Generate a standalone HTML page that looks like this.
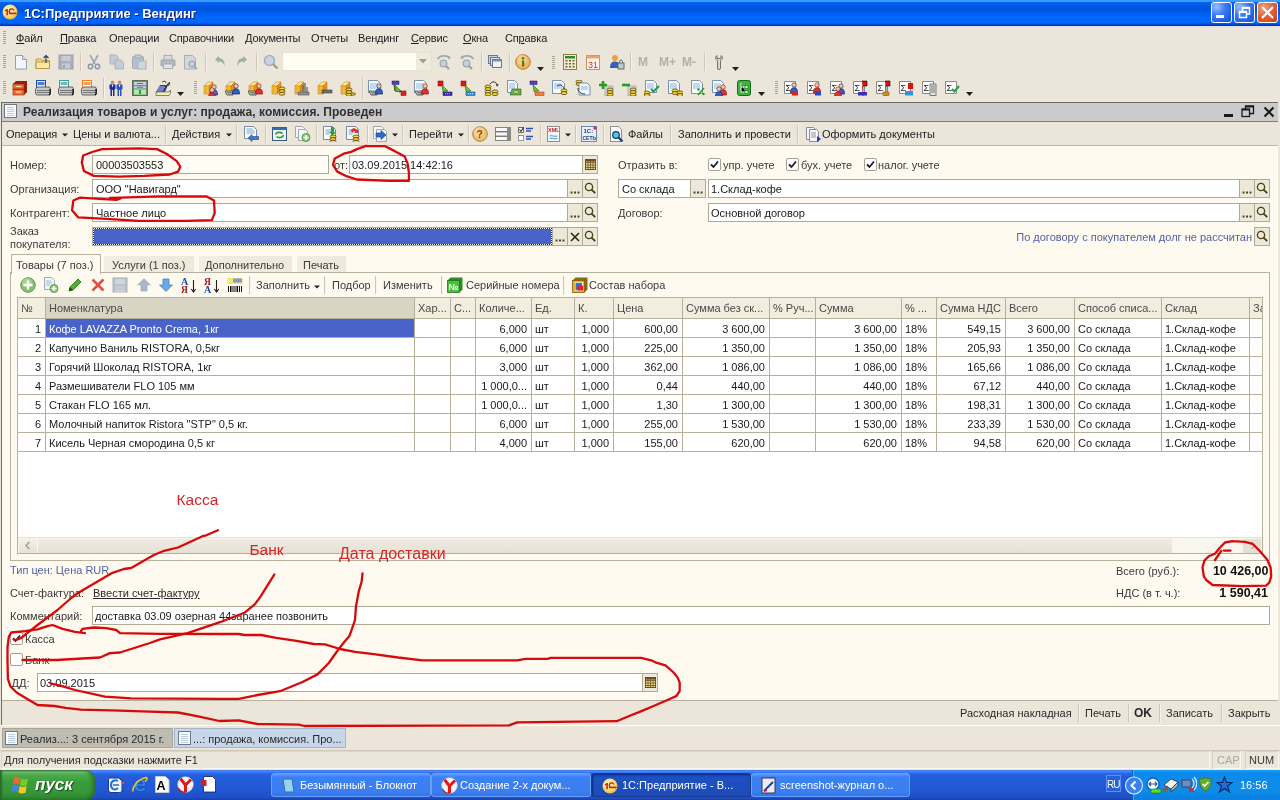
<!DOCTYPE html><html><head><meta charset="utf-8"><style>
*{margin:0;padding:0;box-sizing:border-box}
html,body{width:1280px;height:800px;overflow:hidden;background:#EBE5DA;font-family:"Liberation Sans",sans-serif;font-size:11px;color:#000}
#root{position:absolute;left:0;top:0;width:1280px;height:800px;overflow:hidden;will-change:transform}
#root>div,#root>svg{position:absolute}
.t{position:absolute;white-space:pre;line-height:14px}
</style></head><body><div id="root"><div style="left:0px;top:0px;width:1280px;height:26px;background:linear-gradient(#3C9CFF 0px,#3A98FF 1.5px,#0062F0 2.5px,#0056DE 7px,#0054E0 10px,#0060F4 14px,#0068FF 18px,#0064FA 23px,#0048CC 24.5px,#0030A8 26px)"></div>
<div style="left:0px;top:26px;width:1280px;height:1px;background:#DDE0F0"></div>
<svg style="left:2px;top:4px" width="16" height="16" viewBox="0 0 16 16"><defs><radialGradient id="lg1" cx="45%" cy="40%" r="60%"><stop offset="0" stop-color="#FFF6C8"/><stop offset=".6" stop-color="#FBE27A"/><stop offset="1" stop-color="#EDB440"/></radialGradient></defs><circle cx="8" cy="8" r="7.5" fill="url(#lg1)"/><path d="M2.8 6.2l2-1.2h1.1v6.2H4.4V6.8l-1.3.6z" fill="#C81E0A"/><path d="M12.5 6.3C12 4.8 10.8 4.2 9.6 4.2 7.6 4.2 6.6 5.8 6.6 7.6c0 .9.3 1.7.9 2.2h1.8c-.8-.4-1.2-1.2-1.2-2.2 0-1.2.6-2.1 1.6-2.1.7 0 1.2.4 1.4 1z" fill="#C81E0A"/><rect x="7" y="8.6" width="7.6" height="1.6" fill="#C81E0A"/></svg>
<div class="t" style="left:24px;top:6.50px;font-size:13px;font-weight:bold;color:#fff;text-shadow:1px 1px 0 #0A1E80">1C:Предприятие - Вендинг</div>
<div style="left:1211px;top:2px;width:21px;height:21px;border:1px solid #fff;border-radius:3px;background:radial-gradient(circle at 25% 20%,#9CC0FF 0,#3C7BF5 40%,#2060E8 75%,#1C50D0 100%)"></div>
<div style="left:1234px;top:2px;width:21px;height:21px;border:1px solid #fff;border-radius:3px;background:radial-gradient(circle at 25% 20%,#9CC0FF 0,#3C7BF5 40%,#2060E8 75%,#1C50D0 100%)"></div>
<div style="left:1257px;top:2px;width:21px;height:21px;border:1px solid #fff;border-radius:3px;background:radial-gradient(circle at 30% 25%,#F0A080 0,#E25A2C 55%,#C8401A 100%)"></div>
<div style="left:1216px;top:15px;width:8px;height:3px;background:#fff"></div>
<svg style="left:1234px;top:2px" width="21" height="21"><rect x="5.5" y="9.5" width="7" height="6" stroke="#fff" stroke-width="1.5" fill="none"/><rect x="5.5" y="9.5" width="7" height="1.5" fill="#fff"/><path d="M8.5 9 V5.5 H15.5 V12 H13" stroke="#fff" stroke-width="1.5" fill="none"/><rect x="8.5" y="5.5" width="7" height="1.5" fill="#fff"/></svg>
<svg style="left:1257px;top:2px" width="21" height="21"><path d="M5 5 L16 16 M16 5 L5 16" stroke="#fff" stroke-width="2"/></svg>
<div style="left:0px;top:27px;width:1280px;height:73px;background:#EBE5DA"></div>
<div style="left:3px;top:31px;width:3px;height:14px;background:repeating-linear-gradient(#A8A590 0 1px,transparent 1px 2px)"></div>
<div class="t" style="left:16px;top:31.19px;font-size:11px;color:#1C1C1C;letter-spacing:-0.15px"><u>Ф</u>айл</div>
<div class="t" style="left:60px;top:31.19px;font-size:11px;color:#1C1C1C;letter-spacing:-0.15px"><u>П</u>равка</div>
<div class="t" style="left:109px;top:31.19px;font-size:11px;color:#1C1C1C;letter-spacing:-0.15px">Операции</div>
<div class="t" style="left:169px;top:31.19px;font-size:11px;color:#1C1C1C;letter-spacing:-0.15px">Справочники</div>
<div class="t" style="left:245px;top:31.19px;font-size:11px;color:#1C1C1C;letter-spacing:-0.15px">Документы</div>
<div class="t" style="left:311px;top:31.19px;font-size:11px;color:#1C1C1C;letter-spacing:-0.15px">Отчеты</div>
<div class="t" style="left:358px;top:31.19px;font-size:11px;color:#1C1C1C;letter-spacing:-0.15px">Вендинг</div>
<div class="t" style="left:411px;top:31.19px;font-size:11px;color:#1C1C1C;letter-spacing:-0.15px"><u>С</u>ервис</div>
<div class="t" style="left:463px;top:31.19px;font-size:11px;color:#1C1C1C;letter-spacing:-0.15px"><u>О</u>кна</div>
<div class="t" style="left:505px;top:31.19px;font-size:11px;color:#1C1C1C;letter-spacing:-0.15px">Сп<u>р</u>авка</div>
<div style="left:3px;top:55px;width:3px;height:13px;background:repeating-linear-gradient(#A8A590 0 1px,transparent 1px 2px)"></div>
<svg style="left:13px;top:54px" width="16" height="16" viewBox="0 0 16 16"><path d="M2.5 1.5h7l4 4v9.5h-11z" fill="#F4F8FC" stroke="#8EA0B8"/><path d="M9.5 1.5v4h4" fill="#DDE6F0" stroke="#8EA0B8"/></svg>
<svg style="left:35px;top:54px" width="16" height="16" viewBox="0 0 16 16"><path d="M1 5h5l1 1.5h7.5v8H1z" fill="#F3DC85" stroke="#B89A40"/><path d="M1 8h13.5v6.5H1z" fill="#FBE9A0" stroke="#B89A40"/><path d="M11 9V1.5M8.5 4L11 1.5 13.5 4" stroke="#2A3A5A" stroke-width="1.1" fill="none"/></svg>
<svg style="left:58px;top:54px" width="16" height="16" viewBox="0 0 16 16"><rect x="1" y="1" width="14" height="14" fill="#A8B0BC" stroke="#9AA2AE"/><rect x="3.5" y="2" width="9" height="5" fill="#C6CCD4"/><rect x="4" y="9.5" width="8" height="5" fill="#C6CCD4"/><rect x="5" y="11" width="2" height="3" fill="#98A0AC"/></svg>
<svg style="left:86px;top:54px" width="16" height="16" viewBox="0 0 16 16"><path d="M4 1l5 9M12 1L7 10" stroke="#9AA6B4" stroke-width="1.6"/><circle cx="4.5" cy="12.5" r="2.2" fill="none" stroke="#8A96A6" stroke-width="1.4"/><circle cx="11.5" cy="12.5" r="2.2" fill="none" stroke="#8A96A6" stroke-width="1.4"/></svg>
<svg style="left:109px;top:54px" width="16" height="16" viewBox="0 0 16 16"><path d="M1 1h6l2 2v7H1z" fill="#C4CCD6" stroke="#AAB4C0"/><path d="M6 6h6l2.5 2.5V15H6z" fill="#C4CCD6" stroke="#AAB4C0"/></svg>
<svg style="left:131px;top:54px" width="16" height="16" viewBox="0 0 16 16"><rect x="1.5" y="2.5" width="11" height="12" rx="1" fill="#B8C0CA" stroke="#A0AAB6"/><rect x="4" y="1" width="6" height="3" fill="#C8CED6" stroke="#A0AAB6"/><rect x="7" y="7" width="8" height="8" fill="#D0D6DE" stroke="#A8B2BE"/></svg>
<svg style="left:160px;top:54px" width="16" height="16" viewBox="0 0 16 16"><rect x="4" y="1.5" width="8" height="5" fill="#D8DCE2" stroke="#A8AEB6"/><rect x="1" y="6" width="14" height="6" rx="1" fill="#B4BAC2" stroke="#9EA4AC"/><rect x="3.5" y="10" width="9" height="4.5" fill="#E0E4E8" stroke="#A8AEB6"/></svg>
<svg style="left:183px;top:54px" width="16" height="16" viewBox="0 0 16 16"><path d="M1.5 1.5h8l3 3v10.5h-11z" fill="#D4D8DE" stroke="#A8AEB6"/><circle cx="9" cy="10" r="3" fill="#C8D0DA" stroke="#98A0AA" stroke-width="1.2"/><path d="M11 12l3 3" stroke="#98A0AA" stroke-width="1.6"/></svg>
<svg style="left:213px;top:54px" width="16" height="16" viewBox="0 0 16 16"><path d="M2 5.5L6 2v2.2c4 0 6 2.5 5.5 8.3C10.5 9 9 7.5 6 7.5V9z" fill="#9CB49C"/></svg>
<svg style="left:233px;top:54px" width="16" height="16" viewBox="0 0 16 16"><path d="M14 5.5L10 2v2.2c-4 0-6 2.5-5.5 8.3C5.5 9 7 7.5 10 7.5V9z" fill="#9CB49C"/></svg>
<svg style="left:263px;top:54px" width="16" height="16" viewBox="0 0 16 16"><circle cx="6.5" cy="6.5" r="5" fill="#C6D4E6" stroke="#A6B0BC" stroke-width="1.5"/><path d="M10 10l4.5 4.5" stroke="#A89888" stroke-width="2.4"/></svg>
<svg style="left:436px;top:54px" width="16" height="16" viewBox="0 0 16 16"><path d="M1.5 5C4 1 11 1 14 4" stroke="#A0A8B0" stroke-width="1.6" fill="none"/><path d="M13 1.5l1.5 3-3 .5" fill="#A0A8B0"/><circle cx="7.5" cy="9.5" r="3.3" fill="#C6D0DC" stroke="#A0A8B0" stroke-width="1.3"/><path d="M10 12l3 3" stroke="#A89888" stroke-width="2"/></svg>
<svg style="left:459px;top:54px" width="16" height="16" viewBox="0 0 16 16"><path d="M14.5 5C12 1 5 1 2 4" stroke="#A0A8B0" stroke-width="1.6" fill="none"/><path d="M3 1.5L1.5 4.5l3 .5" fill="#A0A8B0"/><circle cx="7.5" cy="9.5" r="3.3" fill="#C6D0DC" stroke="#A0A8B0" stroke-width="1.3"/><path d="M10 12l3 3" stroke="#A89888" stroke-width="2"/></svg>
<svg style="left:487px;top:54px" width="16" height="16" viewBox="0 0 16 16"><rect x="1.5" y="1.5" width="9" height="8" fill="#C8D4E4" stroke="#6A7890"/><rect x="3.5" y="3.5" width="9" height="8" fill="#D8E2EE" stroke="#6A7890"/><rect x="5.5" y="5.5" width="9" height="8" fill="#EEF3F8" stroke="#6A7890"/><rect x="5.5" y="5.5" width="9" height="2" fill="#7A90B8"/></svg>
<svg style="left:515px;top:54px" width="16" height="16" viewBox="0 0 16 16"><circle cx="8" cy="8" r="7.3" fill="#F0B860" stroke="#B87828"/><circle cx="7" cy="6" r="5" fill="#F8D898" opacity=".7"/><rect x="7" y="6.5" width="2.2" height="6" fill="#4A7A1A"/><circle cx="8.1" cy="4.3" r="1.2" fill="#4A7A1A"/></svg>
<svg style="left:562px;top:54px" width="16" height="16" viewBox="0 0 16 16"><rect x="1.5" y="0.5" width="13" height="15" fill="#F4ECD0" stroke="#8A7A50"/><rect x="3" y="2" width="10" height="2.5" fill="#2E8A2E"/><g fill="#6A5A30"><rect x="3.5" y="6" width="2" height="1.5"/><rect x="7" y="6" width="2" height="1.5"/><rect x="10.5" y="6" width="2" height="1.5"/><rect x="3.5" y="9" width="2" height="1.5"/><rect x="7" y="9" width="2" height="1.5"/><rect x="10.5" y="9" width="2" height="1.5"/><rect x="3.5" y="12" width="2" height="1.5"/><rect x="7" y="12" width="2" height="1.5"/><rect x="10.5" y="12" width="2" height="1.5"/></g></svg>
<svg style="left:585px;top:54px" width="16" height="16" viewBox="0 0 16 16"><rect x="1.5" y="1.5" width="13" height="14" fill="#FFF8EE" stroke="#C89060"/><rect x="1.5" y="1.5" width="13" height="3" fill="#F0A070"/><text x="3" y="14" font-family="Liberation Sans" font-size="9" fill="#D03010">31</text></svg>
<svg style="left:609px;top:54px" width="16" height="16" viewBox="0 0 16 16"><circle cx="6" cy="4" r="3" fill="#F0A040"/><path d="M1 14c0-5 2-6.5 5-6.5s4 1 4 3V14z" fill="#3060C0"/><rect x="9" y="9" width="6" height="6" fill="#C0C8D0" stroke="#606870"/><path d="M10.5 9V7.5a1.5 1.5 0 013 0V9" stroke="#606870" fill="none"/></svg>
<svg style="left:712px;top:54px" width="16" height="16" viewBox="0 0 16 16"><path d="M5 1.5C3 2.5 3 5.5 5.5 6.5V14a1.5 1.5 0 003 0V6.5C11 5.5 11 2.5 9 1.5V4.5H5z" fill="#D8D8D8" stroke="#707070"/></svg>
<div style="left:80px;top:53px;width:2px;height:18px;border-left:1px solid #CBC6B8;border-right:1px solid #F7F4EE"></div>
<div style="left:153px;top:53px;width:2px;height:18px;border-left:1px solid #CBC6B8;border-right:1px solid #F7F4EE"></div>
<div style="left:205px;top:53px;width:2px;height:18px;border-left:1px solid #CBC6B8;border-right:1px solid #F7F4EE"></div>
<div style="left:256px;top:53px;width:2px;height:18px;border-left:1px solid #CBC6B8;border-right:1px solid #F7F4EE"></div>
<div style="left:481px;top:53px;width:2px;height:18px;border-left:1px solid #CBC6B8;border-right:1px solid #F7F4EE"></div>
<div style="left:509px;top:53px;width:2px;height:18px;border-left:1px solid #CBC6B8;border-right:1px solid #F7F4EE"></div>
<div style="left:630px;top:53px;width:2px;height:18px;border-left:1px solid #CBC6B8;border-right:1px solid #F7F4EE"></div>
<div style="left:704px;top:53px;width:2px;height:18px;border-left:1px solid #CBC6B8;border-right:1px solid #F7F4EE"></div>
<div style="left:552px;top:56px;width:3px;height:13px;background:repeating-linear-gradient(#A8A590 0 1px,transparent 1px 2px)"></div>
<div style="left:282px;top:52px;width:150px;height:19px;background:#FFFCF0;border:1px solid #E6E2D2"></div>
<div style="left:416px;top:53px;width:15px;height:17px;background:#EEEBDD"></div>
<svg style="left:419px;top:59px" width="9" height="5"><path d="M0 0h8L4 4.5z" fill="#A09E90"/></svg>
<svg style="left:537px;top:67px" width="8" height="4"><path d="M0 0h7L3.5 4z" fill="#202020"/></svg>
<svg style="left:732px;top:67px" width="8" height="4"><path d="M0 0h7L3.5 4z" fill="#202020"/></svg>
<div class="t" style="left:638px;top:54.84px;font-size:12px;font-weight:bold;color:#B4B1A4">M</div>
<div class="t" style="left:659px;top:54.84px;font-size:12px;font-weight:bold;color:#B4B1A4">M+</div>
<div class="t" style="left:682px;top:54.84px;font-size:12px;font-weight:bold;color:#B4B1A4">M-</div>
<div style="left:3px;top:81px;width:3px;height:13px;background:repeating-linear-gradient(#A8A590 0 1px,transparent 1px 2px)"></div>
<svg style="left:12px;top:80px" width="16" height="16" viewBox="0 0 16 16"><path d="M1 4l3-3h11v11l-3 3H1z" fill="#902010"/><rect x="1" y="4" width="11" height="5" fill="#F07030" stroke="#902010" stroke-width=".6"/><rect x="1" y="9.5" width="11" height="5.5" fill="#F07030" stroke="#902010" stroke-width=".6"/><rect x="4" y="6" width="5" height="1" fill="#FFE0C0"/><rect x="4" y="11.5" width="5" height="1" fill="#FFE0C0"/></svg>
<svg style="left:35px;top:80px" width="16" height="16" viewBox="0 0 16 16"><rect x="1.5" y="0.5" width="9" height="7" fill="#D8E8FF" stroke="#2050B0"/><rect x="2.5" y="2" width="7" height="3" fill="#2050B0" opacity=".7"/><path d="M0.5 9l2-2h12l1 2v4l-1 2H1.5l-1-2z" fill="#C8C8C8" stroke="#303030" stroke-width=".7"/><path d="M2 10.5h12M2 12.5h12" stroke="#404040" stroke-width=".6"/><path d="M15 9v5l-1 1" stroke="#000" stroke-width="1.2" fill="none"/></svg>
<svg style="left:58px;top:80px" width="16" height="16" viewBox="0 0 16 16"><rect x="1.5" y="0.5" width="9" height="7" fill="#E0FFFF" stroke="#40A0A0"/><rect x="2.5" y="2" width="7" height="3" fill="#40A0A0" opacity=".7"/><path d="M0.5 9l2-2h12l1 2v4l-1 2H1.5l-1-2z" fill="#C8C8C8" stroke="#303030" stroke-width=".7"/><path d="M2 10.5h12M2 12.5h12" stroke="#404040" stroke-width=".6"/><path d="M15 9v5l-1 1" stroke="#000" stroke-width="1.2" fill="none"/></svg>
<svg style="left:81px;top:80px" width="16" height="16" viewBox="0 0 16 16"><rect x="1.5" y="0.5" width="9" height="7" fill="#FFF0D0" stroke="#F08020"/><rect x="2.5" y="2" width="7" height="3" fill="#F08020" opacity=".7"/><path d="M0.5 9l2-2h12l1 2v4l-1 2H1.5l-1-2z" fill="#C8C8C8" stroke="#303030" stroke-width=".7"/><path d="M2 10.5h12M2 12.5h12" stroke="#404040" stroke-width=".6"/><path d="M15 9v5l-1 1" stroke="#000" stroke-width="1.2" fill="none"/></svg>
<svg style="left:108px;top:80px" width="16" height="16" viewBox="0 0 16 16"><circle cx="4.5" cy="2.2" r="1.8" fill="#D88850"/><path d="M1.5 5.5c0-1 1-1.5 3-1.5s3 .5 3 1.5V9l-1 .5V16h-1.5v-6h-1v6H2.5V9.5l-1-.5z" fill="#1A2A9A"/><path d="M3.5 4.5l1 3 1-3z" fill="#fff"/><circle cx="11.5" cy="2.2" r="1.8" fill="#D88850"/><path d="M8.5 5.5c0-1 1-1.5 3-1.5s3 .5 3 1.5V9l-1 .5V16h-1.5v-6h-1v6H9.5V9.5l-1-.5z" fill="#2A52B8"/><path d="M10.5 4.5l1 3 1-3z" fill="#fff"/></svg>
<svg style="left:132px;top:80px" width="16" height="16" viewBox="0 0 16 16"><rect x="0.5" y="0.5" width="15" height="15" fill="#7A8A7A" stroke="#5A6A5A"/><rect x="2" y="2" width="12" height="3" fill="#C8D0D8"/><rect x="2" y="6" width="12" height="2.5" fill="#B8C8E0"/><rect x="2" y="9.5" width="12" height="5" fill="#A8F0A8"/><path d="M8 10v4" stroke="#208020" stroke-width="1.6"/><path d="M5 3.5h6M5 7.2h6" stroke="#506050" stroke-width=".8"/></svg>
<svg style="left:155px;top:80px" width="16" height="16" viewBox="0 0 16 16"><path d="M1 12l4-7h7l-2.5 7z" fill="#2838A0"/><g fill="#fff"><circle cx="5" cy="7" r=".7"/><circle cx="7" cy="7" r=".7"/><circle cx="9" cy="7" r=".7"/><circle cx="4" cy="9" r=".7"/><circle cx="6" cy="9" r=".7"/><circle cx="8" cy="9" r=".7"/><circle cx="3" cy="11" r=".7"/><circle cx="5" cy="11" r=".7"/><circle cx="7" cy="11" r=".7"/></g><path d="M7 2l3-1 1 2" stroke="#202020" fill="#fff" stroke-width=".8"/><path d="M10 11l2-6 2-2.5 1 .5-2 3" stroke="#303030" stroke-width="1" fill="#70A040"/><path d="M1 12h13l1.5-2V13l-1.5 2.5H1z" fill="#F0F0C0" stroke="#404020" stroke-width=".6"/></svg>
<svg style="left:203px;top:80px" width="16" height="16" viewBox="0 0 16 16"><path d="M1 6l4-4h5l-4 4z" fill="#FFE890" stroke="#B87010" stroke-width=".5"/><path d="M6 6l4-4v8l-4 4z" fill="#E89020" stroke="#B87010" stroke-width=".5"/><rect x="1" y="6" width="5" height="8" fill="#F8C838" stroke="#B87010" stroke-width=".5"/><path d="M2.5 6.5v7M4 6.5v7" stroke="#E8A020" stroke-width=".7"/><path d="M7.5 15c0-4 1.2-5.2 3.5-5.2s3.5 1.2 3.5 5.2z" fill="#4070D0" stroke="#102060" stroke-width=".7"/><circle cx="11" cy="7" r="2.2" fill="#F6C8A8" stroke="#102060" stroke-width=".6"/><path d="M5.5 18c0-4 1.2-5.2 3.5-5.2s3.5 1.2 3.5 5.2z" fill="#E03030" stroke="#901010" stroke-width=".7"/><circle cx="9" cy="10" r="2.2" fill="#F6C8A8" stroke="#901010" stroke-width=".6"/></svg>
<svg style="left:225px;top:80px" width="16" height="16" viewBox="0 0 16 16"><path d="M1 6l4-4h5l-4 4z" fill="#FFE890" stroke="#B87010" stroke-width=".5"/><path d="M6 6l4-4v8l-4 4z" fill="#E89020" stroke="#B87010" stroke-width=".5"/><rect x="1" y="6" width="5" height="8" fill="#F8C838" stroke="#B87010" stroke-width=".5"/><path d="M2.5 6.5v7M4 6.5v7" stroke="#E8A020" stroke-width=".7"/><path d="M0 11h10l-2 4H2z" fill="#D0D0D0" stroke="#404040" stroke-width=".8"/><path d="M2 12.5h6M3 14h4" stroke="#404040" stroke-width=".6"/><path d="M7.5 14c0-4 1.2-5.2 3.5-5.2s3.5 1.2 3.5 5.2z" fill="#3060C8" stroke="#102060" stroke-width=".7"/><circle cx="11" cy="6" r="2.2" fill="#F6C8A8" stroke="#102060" stroke-width=".6"/></svg>
<svg style="left:248px;top:80px" width="16" height="16" viewBox="0 0 16 16"><path d="M1 6l4-4h5l-4 4z" fill="#FFE890" stroke="#B87010" stroke-width=".5"/><path d="M6 6l4-4v8l-4 4z" fill="#E89020" stroke="#B87010" stroke-width=".5"/><rect x="1" y="6" width="5" height="8" fill="#F8C838" stroke="#B87010" stroke-width=".5"/><path d="M2.5 6.5v7M4 6.5v7" stroke="#E8A020" stroke-width=".7"/><path d="M0 11h10l-2 4H2z" fill="#D0D0D0" stroke="#404040" stroke-width=".8"/><path d="M2 12.5h6M3 14h4" stroke="#404040" stroke-width=".6"/><path d="M7.5 14c0-4 1.2-5.2 3.5-5.2s3.5 1.2 3.5 5.2z" fill="#E03030" stroke="#901010" stroke-width=".7"/><circle cx="11" cy="6" r="2.2" fill="#F6C8A8" stroke="#901010" stroke-width=".6"/></svg>
<svg style="left:271px;top:80px" width="16" height="16" viewBox="0 0 16 16"><path d="M1 6l4-4h5l-4 4z" fill="#FFE890" stroke="#B87010" stroke-width=".5"/><path d="M6 6l4-4v8l-4 4z" fill="#E89020" stroke="#B87010" stroke-width=".5"/><rect x="1" y="6" width="5" height="8" fill="#F8C838" stroke="#B87010" stroke-width=".5"/><path d="M2.5 6.5v7M4 6.5v7" stroke="#E8A020" stroke-width=".7"/><ellipse cx="11" cy="8.5" rx="3" ry="1.5" fill="#F8D838" stroke="#403000" stroke-width=".7"/><ellipse cx="11" cy="11.1" rx="3" ry="1.5" fill="#F8D838" stroke="#403000" stroke-width=".7"/><ellipse cx="11" cy="13.7" rx="3" ry="1.5" fill="#F8D838" stroke="#403000" stroke-width=".7"/></svg>
<svg style="left:294px;top:80px" width="16" height="16" viewBox="0 0 16 16"><path d="M1 6l4-4h5l-4 4z" fill="#FFE890" stroke="#B87010" stroke-width=".5"/><path d="M6 6l4-4v8l-4 4z" fill="#E89020" stroke="#B87010" stroke-width=".5"/><rect x="1" y="6" width="5" height="8" fill="#F8C838" stroke="#B87010" stroke-width=".5"/><path d="M2.5 6.5v7M4 6.5v7" stroke="#E8A020" stroke-width=".7"/><path d="M4 15h11v-3H4z" fill="#909090" stroke="#505050" stroke-width=".6"/><path d="M9 12V5M11 12V3M13 12V7" stroke="#606060" stroke-width="1.2"/></svg>
<svg style="left:317px;top:80px" width="16" height="16" viewBox="0 0 16 16"><path d="M1 6l4-4h5l-4 4z" fill="#FFE890" stroke="#B87010" stroke-width=".5"/><path d="M6 6l4-4v8l-4 4z" fill="#E89020" stroke="#B87010" stroke-width=".5"/><rect x="1" y="6" width="5" height="8" fill="#F8C838" stroke="#B87010" stroke-width=".5"/><path d="M2.5 6.5v7M4 6.5v7" stroke="#E8A020" stroke-width=".7"/><rect x="5" y="10" width="10" height="3" fill="#707070" stroke="#404040" stroke-width=".6"/></svg>
<svg style="left:340px;top:80px" width="16" height="16" viewBox="0 0 16 16"><path d="M1 6l4-4h5l-4 4z" fill="#FFE890" stroke="#B87010" stroke-width=".5"/><path d="M6 6l4-4v8l-4 4z" fill="#E89020" stroke="#B87010" stroke-width=".5"/><rect x="1" y="6" width="5" height="8" fill="#F8C838" stroke="#B87010" stroke-width=".5"/><path d="M2.5 6.5v7M4 6.5v7" stroke="#E8A020" stroke-width=".7"/><ellipse cx="9" cy="9.5" rx="3" ry="1.5" fill="#F8D838" stroke="#403000" stroke-width=".7"/><ellipse cx="9" cy="12.1" rx="3" ry="1.5" fill="#F8D838" stroke="#403000" stroke-width=".7"/><ellipse cx="9" cy="14.7" rx="3" ry="1.5" fill="#F8D838" stroke="#403000" stroke-width=".7"/><ellipse cx="13" cy="14" rx="2.5" ry="1.2" fill="#F8D838" stroke="#403000" stroke-width=".7"/></svg>
<svg style="left:368px;top:80px" width="16" height="16" viewBox="0 0 16 16"><path d="M0.5 0.5h9l3 3v9h-12z" fill="#F8FBFF" stroke="#5A7AA0" stroke-width=".8"/><path d="M2 4h8M2 6h8M2 8h8" stroke="#70A8D8" stroke-width=".8"/><path d="M1 11h10l-2 4H3z" fill="#D0D0D0" stroke="#404040" stroke-width=".8"/><path d="M3 12.5h6M4 14h4" stroke="#404040" stroke-width=".6"/><path d="M7.5 14c0-4 1.2-5.2 3.5-5.2s3.5 1.2 3.5 5.2z" fill="#3060C8" stroke="#102060" stroke-width=".7"/><circle cx="11" cy="6" r="2.2" fill="#F6C8A8" stroke="#102060" stroke-width=".6"/></svg>
<svg style="left:391px;top:80px" width="16" height="16" viewBox="0 0 16 16"><rect x="1" y="1" width="7" height="3.5" fill="#5040C0" stroke="#201060" stroke-width=".5"/><path d="M3 5l1 6h6l-1.5 1.5" stroke="#205010" stroke-width="1" fill="#80D040"/><path d="M4 5l6 6-5 .5z" fill="#70C030" stroke="#306010" stroke-width=".6"/><rect x="10" y="11" width="5" height="4.5" fill="#E02020" stroke="#800000" stroke-width=".5"/></svg>
<svg style="left:414px;top:80px" width="16" height="16" viewBox="0 0 16 16"><path d="M0.5 0.5h9l3 3v9h-12z" fill="#F8FBFF" stroke="#5A7AA0" stroke-width=".8"/><path d="M2 4h8M2 6h8M2 8h8" stroke="#70A8D8" stroke-width=".8"/><path d="M1 11h10l-2 4H3z" fill="#D0D0D0" stroke="#404040" stroke-width=".8"/><path d="M3 12.5h6M4 14h4" stroke="#404040" stroke-width=".6"/><path d="M7.5 14c0-4 1.2-5.2 3.5-5.2s3.5 1.2 3.5 5.2z" fill="#E03030" stroke="#901010" stroke-width=".7"/><circle cx="11" cy="6" r="2.2" fill="#F6C8A8" stroke="#901010" stroke-width=".6"/></svg>
<svg style="left:437px;top:80px" width="16" height="16" viewBox="0 0 16 16"><rect x="1" y="1" width="5" height="5" fill="#E01818" stroke="#800000" stroke-width=".5"/><path d="M5 5l6 6-5 .5z" fill="#70C030" stroke="#306010" stroke-width=".6"/><rect x="6" y="12" width="9" height="3.5" fill="#3830B0" stroke="#100860" stroke-width=".5"/><path d="M8 13.7h5" stroke="#B0B0FF" stroke-dasharray="1 1"/></svg>
<svg style="left:460px;top:80px" width="16" height="16" viewBox="0 0 16 16"><rect x="1" y="1" width="5" height="5" fill="#E01818" stroke="#800000" stroke-width=".5"/><path d="M5 5l6 6-5 .5z" fill="#70C030" stroke="#306010" stroke-width=".6"/><rect x="6" y="12" width="9" height="3.5" fill="#3890E0" stroke="#104080" stroke-width=".5"/><path d="M8 13.7h5" stroke="#E0F0FF" stroke-dasharray="1 1"/></svg>
<svg style="left:484px;top:80px" width="16" height="16" viewBox="0 0 16 16"><ellipse cx="4" cy="6.5" rx="3" ry="1.5" fill="#F8D838" stroke="#403000" stroke-width=".7"/><ellipse cx="4" cy="9.1" rx="3" ry="1.5" fill="#F8D838" stroke="#403000" stroke-width=".7"/><ellipse cx="4" cy="11.7" rx="3" ry="1.5" fill="#F8D838" stroke="#403000" stroke-width=".7"/><ellipse cx="4" cy="14.3" rx="3" ry="1.5" fill="#F8D838" stroke="#403000" stroke-width=".7"/><ellipse cx="11" cy="11.5" rx="3" ry="1.5" fill="#F8D838" stroke="#403000" stroke-width=".7"/><ellipse cx="11" cy="14.1" rx="3" ry="1.5" fill="#F8D838" stroke="#403000" stroke-width=".7"/><path d="M6 4c2-3 6-3 7 1" stroke="#202020" fill="none" stroke-width=".9"/><path d="M12 5l1.5 1 .5-2" stroke="#202020" fill="none" stroke-width=".9"/></svg>
<svg style="left:506px;top:80px" width="16" height="16" viewBox="0 0 16 16"><path d="M1.5 0.5h7l3 3v9h-10z" fill="#F8FBFF" stroke="#5A7AA0" stroke-width=".8"/><path d="M3 4h6M3 6h6M3 8h6" stroke="#70A8D8" stroke-width=".8"/><path d="M4 15l2-6h9v6z" fill="#60B060" stroke="#206020" stroke-width=".6"/><ellipse cx="10" cy="12" rx="2.5" ry="1.5" fill="#F0D040" stroke="#806000" stroke-width=".5"/></svg>
<svg style="left:529px;top:80px" width="16" height="16" viewBox="0 0 16 16"><rect x="1" y="1" width="7" height="3.5" fill="#5040C0" stroke="#201060" stroke-width=".5"/><path d="M4 5l6 6-5 .5z" fill="#70C030" stroke="#306010" stroke-width=".6"/><rect x="6" y="12" width="9" height="3.5" fill="#F08040" stroke="#904010" stroke-width=".5"/></svg>
<svg style="left:552px;top:80px" width="16" height="16" viewBox="0 0 16 16"><path d="M0.5 0.5h9l3 3v10h-12z" fill="#F8FBFF" stroke="#5A7AA0" stroke-width=".8"/><path d="M2 4h8M2 6h8M2 8h8" stroke="#70A8D8" stroke-width=".8"/><path d="M5 6c3-2 6-1 7 3" stroke="#202020" fill="none" stroke-width=".9"/><ellipse cx="12" cy="10.5" rx="3" ry="1.5" fill="#F8D838" stroke="#403000" stroke-width=".7"/><ellipse cx="12" cy="13.1" rx="3" ry="1.5" fill="#F8D838" stroke="#403000" stroke-width=".7"/></svg>
<svg style="left:575px;top:80px" width="16" height="16" viewBox="0 0 16 16"><ellipse cx="4" cy="1.5" rx="3" ry="1.5" fill="#F8D838" stroke="#403000" stroke-width=".7"/><ellipse cx="4" cy="4.1" rx="3" ry="1.5" fill="#F8D838" stroke="#403000" stroke-width=".7"/><path d="M4 3h8l3 3v9H4z" fill="#F0F8FF" stroke="#5A7AA0" stroke-width=".8"/><path d="M6 7h7M6 9h7" stroke="#70A8D8" stroke-width=".8"/><path d="M3 8c0 4 3 6 7 6" stroke="#202020" fill="none" stroke-width=".9"/></svg>
<svg style="left:598px;top:80px" width="16" height="16" viewBox="0 0 16 16"><path d="M7 6h8v10H7z" fill="#D8D8D8" stroke="#909090" stroke-width=".6"/><path d="M1 5h8M5 1v8" stroke="#20A020" stroke-width="2.6"/><ellipse cx="12" cy="9.5" rx="3" ry="1.5" fill="#F8D838" stroke="#403000" stroke-width=".7"/><ellipse cx="12" cy="12.1" rx="3" ry="1.5" fill="#F8D838" stroke="#403000" stroke-width=".7"/><ellipse cx="12" cy="14.7" rx="3" ry="1.5" fill="#F8D838" stroke="#403000" stroke-width=".7"/></svg>
<svg style="left:621px;top:80px" width="16" height="16" viewBox="0 0 16 16"><path d="M7 6h8v10H7z" fill="#D8D8D8" stroke="#909090" stroke-width=".6"/><path d="M1 5h8" stroke="#20A020" stroke-width="2.6"/><ellipse cx="12" cy="9.5" rx="3" ry="1.5" fill="#F8D838" stroke="#403000" stroke-width=".7"/><ellipse cx="12" cy="12.1" rx="3" ry="1.5" fill="#F8D838" stroke="#403000" stroke-width=".7"/><ellipse cx="12" cy="14.7" rx="3" ry="1.5" fill="#F8D838" stroke="#403000" stroke-width=".7"/></svg>
<svg style="left:644px;top:80px" width="16" height="16" viewBox="0 0 16 16"><path d="M1.5 0.5h8l3 3v9h-11z" fill="#F8FBFF" stroke="#5A7AA0" stroke-width=".8"/><path d="M3 4h7M3 6h7M3 8h7" stroke="#70A8D8" stroke-width=".8"/><path d="M7 9l2.5 2.5L15 6" stroke="#20A040" stroke-width="2" fill="none"/><ellipse cx="3" cy="12.5" rx="3" ry="1.5" fill="#F8D838" stroke="#403000" stroke-width=".7"/><ellipse cx="3" cy="15.1" rx="3" ry="1.5" fill="#F8D838" stroke="#403000" stroke-width=".7"/></svg>
<svg style="left:667px;top:80px" width="16" height="16" viewBox="0 0 16 16"><path d="M1.5 0.5h8l3 3v10h-11z" fill="#F8FBFF" stroke="#5A7AA0" stroke-width=".8"/><path d="M3 4h7M3 6h7M3 8h7" stroke="#70A8D8" stroke-width=".8"/><ellipse cx="8" cy="10.5" rx="3" ry="1.5" fill="#F8D838" stroke="#403000" stroke-width=".7"/><ellipse cx="8" cy="13.1" rx="3" ry="1.5" fill="#F8D838" stroke="#403000" stroke-width=".7"/><ellipse cx="13" cy="12.5" rx="3" ry="1.5" fill="#F8D838" stroke="#403000" stroke-width=".7"/><ellipse cx="13" cy="15.1" rx="3" ry="1.5" fill="#F8D838" stroke="#403000" stroke-width=".7"/></svg>
<svg style="left:690px;top:80px" width="16" height="16" viewBox="0 0 16 16"><path d="M1.5 0.5h8l3 3v10h-11z" fill="#F8FBFF" stroke="#5A7AA0" stroke-width=".8"/><path d="M3 4h7M3 6h7M3 8h7" stroke="#70A8D8" stroke-width=".8"/><path d="M8 15l6-7" stroke="#20A020" stroke-width="1.5"/><circle cx="8.5" cy="9.5" r="1.2" fill="#20A020"/><circle cx="13.5" cy="14" r="1.2" fill="#20A020"/></svg>
<svg style="left:712px;top:80px" width="16" height="16" viewBox="0 0 16 16"><path d="M0.5 0.5h8l3 3v9h-11z" fill="#F8FBFF" stroke="#5A7AA0" stroke-width=".8"/><path d="M2 4h7M2 6h7M2 8h7" stroke="#70A8D8" stroke-width=".8"/><path d="M7.5 15c0-4 1.2-5.2 3.5-5.2s3.5 1.2 3.5 5.2z" fill="#E03030" stroke="#901010" stroke-width=".7"/><circle cx="11" cy="7" r="2.2" fill="#F6C8A8" stroke="#901010" stroke-width=".6"/><path d="M3.5 17c0-4 1.2-5.2 3.5-5.2s3.5 1.2 3.5 5.2z" fill="#3060C8" stroke="#102060" stroke-width=".7"/><circle cx="7" cy="9" r="2.2" fill="#F6C8A8" stroke="#102060" stroke-width=".6"/></svg>
<svg style="left:736px;top:80px" width="16" height="16" viewBox="0 0 16 16"><rect x="1.5" y="0.5" width="13" height="15" rx="2" fill="#40B040" stroke="#107010"/><path d="M5 3v9h4M5 7h4" stroke="#FFFFFF" stroke-width="1"/><rect x="9" y="5.5" width="3" height="3" fill="#C0FFC0" stroke="#105010" stroke-width=".5"/><rect x="9" y="10.5" width="3" height="3" fill="#C0FFC0" stroke="#105010" stroke-width=".5"/></svg>
<svg style="left:783px;top:80px" width="16" height="16" viewBox="0 0 16 16"><path d="M1.5 1.5h11v12h-11z" fill="#fff" stroke="#707070" stroke-width=".8"/><text x="2.5" y="11" font-family="Liberation Sans" font-size="9" fill="#202020">Σ</text><path d="M7.5 13c0-4 1.2-5.2 3.5-5.2s3.5 1.2 3.5 5.2z" fill="#3060C8" stroke="#102060" stroke-width=".7"/><circle cx="11" cy="5" r="2.2" fill="#F6C8A8" stroke="#102060" stroke-width=".6"/><rect x="9" y="11" width="6" height="4.5" fill="#E02020"/></svg>
<svg style="left:806px;top:80px" width="16" height="16" viewBox="0 0 16 16"><path d="M1.5 1.5h11v12h-11z" fill="#fff" stroke="#707070" stroke-width=".8"/><text x="2.5" y="11" font-family="Liberation Sans" font-size="9" fill="#202020">Σ</text><path d="M7.5 13c0-4 1.2-5.2 3.5-5.2s3.5 1.2 3.5 5.2z" fill="#E03030" stroke="#901010" stroke-width=".7"/><circle cx="11" cy="5" r="2.2" fill="#F6C8A8" stroke="#901010" stroke-width=".6"/><rect x="9" y="11" width="6" height="4.5" fill="#2050C0"/></svg>
<svg style="left:829px;top:80px" width="16" height="16" viewBox="0 0 16 16"><path d="M1.5 1.5h11v12h-11z" fill="#fff" stroke="#707070" stroke-width=".8"/><text x="2.5" y="11" font-family="Liberation Sans" font-size="9" fill="#202020">Σ</text><path d="M8.5 14c0-4 1.2-5.2 3.5-5.2s3.5 1.2 3.5 5.2z" fill="#3060C8" stroke="#102060" stroke-width=".7"/><circle cx="12" cy="6" r="2.2" fill="#F6C8A8" stroke="#102060" stroke-width=".6"/><path d="M5.5 17c0-4 1.2-5.2 3.5-5.2s3.5 1.2 3.5 5.2z" fill="#E03030" stroke="#901010" stroke-width=".7"/><circle cx="9" cy="9" r="2.2" fill="#F6C8A8" stroke="#901010" stroke-width=".6"/></svg>
<svg style="left:852px;top:80px" width="16" height="16" viewBox="0 0 16 16"><path d="M1.5 1.5h11v12h-11z" fill="#fff" stroke="#707070" stroke-width=".8"/><text x="2.5" y="11" font-family="Liberation Sans" font-size="9" fill="#202020">Σ</text><path d="M10 1h5v5h-4v10" stroke="#000" stroke-width=".6" fill="#E01010"/><rect x="6" y="12" width="9" height="3.5" fill="#3830B0"/></svg>
<svg style="left:875px;top:80px" width="16" height="16" viewBox="0 0 16 16"><path d="M1.5 1.5h11v12h-11z" fill="#fff" stroke="#707070" stroke-width=".8"/><text x="2.5" y="11" font-family="Liberation Sans" font-size="9" fill="#202020">Σ</text><path d="M10 1h5v5h-4v10" stroke="#000" stroke-width=".6" fill="#E01010"/><rect x="8" y="12" width="6" height="3.5" fill="#D09020" stroke="#705010" stroke-width=".5"/></svg>
<svg style="left:898px;top:80px" width="16" height="16" viewBox="0 0 16 16"><path d="M1.5 1.5h11v12h-11z" fill="#fff" stroke="#707070" stroke-width=".8"/><text x="2.5" y="11" font-family="Liberation Sans" font-size="9" fill="#202020">Σ</text><rect x="10" y="3" width="5" height="6" fill="#E01010"/><rect x="7" y="11" width="8" height="4.5" fill="#3890E0"/></svg>
<svg style="left:921px;top:80px" width="16" height="16" viewBox="0 0 16 16"><path d="M1.5 1.5h11v12h-11z" fill="#fff" stroke="#707070" stroke-width=".8"/><text x="2.5" y="11" font-family="Liberation Sans" font-size="9" fill="#202020">Σ</text><rect x="9" y="4" width="6" height="11.5" fill="#E0E0E0" stroke="#505050" stroke-width=".7"/><path d="M10 6h4M10 8h4M10 10h4M10 12h4" stroke="#505050" stroke-width=".7"/></svg>
<svg style="left:944px;top:80px" width="16" height="16" viewBox="0 0 16 16"><path d="M1.5 1.5h11v12h-11z" fill="#fff" stroke="#707070" stroke-width=".8"/><text x="2.5" y="11" font-family="Liberation Sans" font-size="9" fill="#202020">Σ</text><path d="M8 9l2.5 2.5L15 6" stroke="#20A040" stroke-width="2" fill="none"/></svg>
<div style="left:103px;top:78px;width:2px;height:20px;border-left:1px solid #CBC6B8;border-right:1px solid #F7F4EE"></div>
<div style="left:362px;top:78px;width:2px;height:20px;border-left:1px solid #CBC6B8;border-right:1px solid #F7F4EE"></div>
<div style="left:194px;top:81px;width:3px;height:13px;background:repeating-linear-gradient(#A8A590 0 1px,transparent 1px 2px)"></div>
<div style="left:775px;top:81px;width:3px;height:13px;background:repeating-linear-gradient(#A8A590 0 1px,transparent 1px 2px)"></div>
<svg style="left:177px;top:92px" width="8" height="4"><path d="M0 0h7L3.5 4z" fill="#202020"/></svg>
<svg style="left:758px;top:92px" width="8" height="4"><path d="M0 0h7L3.5 4z" fill="#202020"/></svg>
<svg style="left:966px;top:92px" width="8" height="4"><path d="M0 0h7L3.5 4z" fill="#202020"/></svg>
<div style="left:0px;top:100px;width:1280px;height:2px;background:#EEE9DF"></div>
<div style="left:0px;top:101px;width:1280px;height:600px;background:#EBE5DA"></div>
<div style="left:1px;top:102px;width:1277px;height:1px;background:#6F6C64"></div>
<div style="left:1px;top:103px;width:1277px;height:18px;background:#CBCBCB"></div>
<div style="left:1px;top:121px;width:1277px;height:1px;background:#7F7C74"></div>
<svg style="left:4px;top:104px" width="13" height="14" viewBox="0 0 13 14"><rect x=".5" y=".5" width="12" height="13" fill="#F8FBFF" stroke="#6A7888" stroke-width="1"/><path d="M3 3.5h7M3 5.5h7M3 7.5h7M3 9.5h7M3 11.5h7" stroke="#A8C0D8" stroke-width=".8"/></svg>
<div class="t" style="left:23px;top:104.84px;font-size:12px;font-weight:bold;color:#303030;letter-spacing:0.05px">Реализация товаров и услуг: продажа, комиссия. Проведен</div>
<div style="left:1224px;top:114px;width:9px;height:3px;background:#1A1A1A"></div>
<svg style="left:1241px;top:105px" width="14" height="13"><rect x="1" y="4" width="7.5" height="7.5" fill="none" stroke="#1A1A1A" stroke-width="1.3"/><rect x="1" y="4" width="7.5" height="1.5" fill="#1A1A1A"/><path d="M4.5 4V1h8v7.5h-4" fill="none" stroke="#1A1A1A" stroke-width="1.3"/><rect x="4.5" y="1" width="8" height="1.5" fill="#1A1A1A"/></svg>
<svg style="left:1263px;top:106px" width="12" height="12"><path d="M1.5 1.5l9 9M10.5 1.5l-9 9" stroke="#1A1A1A" stroke-width="2"/></svg>
<div style="left:1px;top:102px;width:1px;height:623px;background:#6F6C64"></div>
<div style="left:2px;top:122px;width:1276px;height:24px;background:#EBE5DA"></div>
<div style="left:2px;top:145px;width:1276px;height:1px;background:#BEB9AB"></div>
<div class="t" style="left:6px;top:127.19px;font-size:11px;color:#222">Операция</div>
<svg style="left:62px;top:133px" width="6" height="4"><path d="M0 0.5h6L3 3.5z" fill="#202020"/></svg>
<div class="t" style="left:73px;top:127.19px;font-size:11px;color:#222">Цены и валюта...</div>
<div style="left:165px;top:125px;width:2px;height:18px;border-left:1px solid #CBC6B8;border-right:1px solid #F7F4EE"></div>
<div class="t" style="left:172px;top:127.19px;font-size:11px;color:#222">Действия</div>
<svg style="left:226px;top:133px" width="6" height="4"><path d="M0 0.5h6L3 3.5z" fill="#202020"/></svg>
<div style="left:236px;top:125px;width:2px;height:18px;border-left:1px solid #CBC6B8;border-right:1px solid #F7F4EE"></div>
<svg style="left:243px;top:126px" width="16" height="16" viewBox="0 0 16 16"><path d="M1.5 .5h9l3 3v9h-12z" fill="#F8FBFF" stroke="#5A7090" stroke-width=".8"/><path d="M3.5 3h6M3.5 5h8M3.5 7h8" stroke="#6090C0" stroke-width=".8"/><path d="M5 12l4-3.5v2h6.5v3H9v2z" fill="#3A7AC8" stroke="#1A4A90" stroke-width=".6"/></svg>
<div style="left:265px;top:125px;width:2px;height:18px;border-left:1px solid #CBC6B8;border-right:1px solid #F7F4EE"></div>
<svg style="left:272px;top:126px" width="16" height="16" viewBox="0 0 16 16"><rect x="0.5" y="1.5" width="14" height="13" fill="#F0F4FA" stroke="#3A5A80"/><rect x="0.5" y="1.5" width="14" height="2.5" fill="#3A6AB0"/><path d="M3.5 8.5a4 3 0 017-1" stroke="#2A9A2A" stroke-width="1.6" fill="none"/><path d="M11.5 9a4 3 0 01-7 1.5" stroke="#2A9A2A" stroke-width="1.6" fill="none"/></svg>
<svg style="left:295px;top:126px" width="16" height="16" viewBox="0 0 16 16"><path d="M.5 .5h7l2 2v9H.5z" fill="#F4F6F8" stroke="#8A96A4" stroke-width=".8"/><path d="M3.5 3.5h7l2 2v9H3.5z" fill="#F4F6F8" stroke="#8A96A4" stroke-width=".8"/><circle cx="11" cy="11.5" r="4" fill="#8ACA7A" stroke="#4A8A3A" stroke-width=".8"/><path d="M8.5 11.5h5M11 9v5" stroke="#fff" stroke-width="1.4"/></svg>
<div style="left:316px;top:125px;width:2px;height:18px;border-left:1px solid #CBC6B8;border-right:1px solid #F7F4EE"></div>
<svg style="left:322px;top:126px" width="16" height="16" viewBox="0 0 16 16"><path d="M1.5 .5h9l3 3v10h-12z" fill="#F8FBFF" stroke="#5A7090" stroke-width=".8"/><path d="M3.5 4h6M3.5 6h6M3.5 8h4" stroke="#6090C0" stroke-width=".8"/><path d="M9 1v5h-2l3.5 3.5L14 6h-2V1z" fill="#30A030"/><ellipse cx="11" cy="10.5" rx="3" ry="1.5" fill="#F8D838" stroke="#403000" stroke-width=".7"/><ellipse cx="11" cy="13.1" rx="3" ry="1.5" fill="#F8D838" stroke="#403000" stroke-width=".7"/><ellipse cx="11" cy="15.7" rx="3" ry="1.5" fill="#F8D838" stroke="#403000" stroke-width=".7"/></svg>
<svg style="left:345px;top:126px" width="16" height="16" viewBox="0 0 16 16"><path d="M1.5 .5h9l3 3v10h-12z" fill="#F8FBFF" stroke="#5A7090" stroke-width=".8"/><path d="M3.5 4h6M3.5 6h6M3.5 8h4" stroke="#6090C0" stroke-width=".8"/><path d="M6 5c0-3 4-4 6-1l1-1v4H9l1.5-1c-1-2-3-1-3 1z" fill="#E03020"/><ellipse cx="11" cy="10.5" rx="3" ry="1.5" fill="#F8D838" stroke="#403000" stroke-width=".7"/><ellipse cx="11" cy="13.1" rx="3" ry="1.5" fill="#F8D838" stroke="#403000" stroke-width=".7"/><ellipse cx="11" cy="15.7" rx="3" ry="1.5" fill="#F8D838" stroke="#403000" stroke-width=".7"/></svg>
<div style="left:367px;top:125px;width:2px;height:18px;border-left:1px solid #CBC6B8;border-right:1px solid #F7F4EE"></div>
<svg style="left:373px;top:126px" width="16" height="16" viewBox="0 0 16 16"><path d="M.5 .5h8l2 2v10H.5z" fill="#F4F6F8" stroke="#8A96A4" stroke-width=".8"/><path d="M3.5 3.5h8l2 2v10h-10z" fill="#F4F6F8" stroke="#8A96A4" stroke-width=".8"/><path d="M3 7h5V4.5l5 4.5-5 4.5V11H3z" fill="#2A6ACA" stroke="#0A3A8A" stroke-width=".6"/></svg>
<svg style="left:392px;top:133px" width="6" height="4"><path d="M0 0.5h6L3 3.5z" fill="#202020"/></svg>
<div style="left:402px;top:125px;width:2px;height:18px;border-left:1px solid #CBC6B8;border-right:1px solid #F7F4EE"></div>
<div class="t" style="left:409px;top:127.19px;font-size:11px;color:#222">Перейти</div>
<svg style="left:458px;top:133px" width="6" height="4"><path d="M0 0.5h6L3 3.5z" fill="#202020"/></svg>
<div style="left:468px;top:125px;width:2px;height:18px;border-left:1px solid #CBC6B8;border-right:1px solid #F7F4EE"></div>
<svg style="left:472px;top:126px" width="16" height="16" viewBox="0 0 16 16"><circle cx="8" cy="8" r="7.3" fill="#F0C070" stroke="#B08038"/><circle cx="7" cy="6" r="5" fill="#FAE0A8" opacity=".6"/><text x="4.6" y="12.3" font-family="Liberation Sans" font-weight="bold" font-size="10.5" fill="#8A3A10">?</text></svg>
<svg style="left:495px;top:126px" width="16" height="16" viewBox="0 0 16 16"><rect x=".5" y="1.5" width="15" height="4" fill="#F8F8F8" stroke="#6A6A6A" stroke-width=".8"/><rect x=".5" y="6" width="15" height="4" fill="#F8F8F8" stroke="#6A6A6A" stroke-width=".8"/><rect x=".5" y="10.5" width="15" height="4" fill="#F8F8F8" stroke="#6A6A6A" stroke-width=".8"/><rect x="12" y="1.5" width="3.5" height="13" fill="#8A8A8A"/></svg>
<svg style="left:518px;top:126px" width="16" height="16" viewBox="0 0 16 16"><rect x=".5" y="1.5" width="5" height="5" fill="#fff" stroke="#505050" stroke-width=".8"/><path d="M1.5 3.5l1.5 2 2.5-4" stroke="#000" stroke-width="1" fill="none"/><rect x=".5" y="9.5" width="5" height="5" fill="#fff" stroke="#808080" stroke-width=".8"/><path d="M8 2.5h7M8 5h5M8 10.5h7M8 13h5" stroke="#3050B0" stroke-width="1.4"/></svg>
<div style="left:540px;top:125px;width:2px;height:18px;border-left:1px solid #CBC6B8;border-right:1px solid #F7F4EE"></div>
<svg style="left:547px;top:126px" width="16" height="16" viewBox="0 0 16 16"><rect x=".5" y=".5" width="12" height="15" fill="#F8FAFC" stroke="#707880" stroke-width=".8"/><text x="1" y="6" font-family="Liberation Sans" font-weight="bold" font-size="5.5" fill="#C02020">XML</text><path d="M2.5 10c2-1 4 1 8 0M2.5 12.5c2-1 4 1 8 0" stroke="#3AA0D0" stroke-width="1" fill="none"/></svg>
<svg style="left:565px;top:133px" width="6" height="4"><path d="M0 0.5h6L3 3.5z" fill="#202020"/></svg>
<div style="left:575px;top:125px;width:2px;height:18px;border-left:1px solid #CBC6B8;border-right:1px solid #F7F4EE"></div>
<svg style="left:581px;top:126px" width="16" height="16" viewBox="0 0 16 16"><rect x=".5" y=".5" width="15" height="15" fill="#E8F0FA" stroke="#5070A0" stroke-width=".8"/><text x="2.5" y="7" font-family="Liberation Sans" font-weight="bold" font-size="6" fill="#203A80">1C:</text><text x="1.5" y="13.5" font-family="Liberation Sans" font-weight="bold" font-size="5" fill="#203A80">СЕТЬ</text><rect x="12.5" y=".5" width="3" height="3" fill="#E02080"/></svg>
<div style="left:603px;top:125px;width:2px;height:18px;border-left:1px solid #CBC6B8;border-right:1px solid #F7F4EE"></div>
<svg style="left:609px;top:126px" width="16" height="16" viewBox="0 0 16 16"><path d="M1.5 .5h8l3 3v12h-11z" fill="#F8FAFC" stroke="#6A7480" stroke-width=".8"/><circle cx="7" cy="9" r="3.3" fill="#60C0E0" stroke="#104060" stroke-width="1.2"/><path d="M9.5 11.5l4 4" stroke="#1A3A8A" stroke-width="2.2"/></svg>
<div class="t" style="left:628px;top:127.19px;font-size:11px;color:#222">Файлы</div>
<div style="left:670px;top:125px;width:2px;height:18px;border-left:1px solid #CBC6B8;border-right:1px solid #F7F4EE"></div>
<div class="t" style="left:678px;top:127.19px;font-size:11px;color:#222">Заполнить и провести</div>
<div style="left:797px;top:125px;width:2px;height:18px;border-left:1px solid #CBC6B8;border-right:1px solid #F7F4EE"></div>
<svg style="left:806px;top:126px" width="16" height="16" viewBox="0 0 16 16"><path d="M.5 1.5h7l2 2v10H.5z" fill="#F4F6F8" stroke="#6A7480" stroke-width=".8"/><path d="M3.5 3.5h7l2 2v10h-9z" fill="#F4F6F8" stroke="#6A7480" stroke-width=".8"/><path d="M5 7h5M5 9h5M5 11h5" stroke="#707070" stroke-width=".7"/><path d="M11 10l4 3-4 3z" fill="#1A3AD0"/></svg>
<div class="t" style="left:822px;top:127.19px;font-size:11px;color:#222">Оформить документы</div>
<div style="left:2px;top:146px;width:1276px;height:554px;background:#FFFAF0"></div>
<div style="left:1277px;top:146px;width:1px;height:554px;background:#FFFFFF"></div>
<div class="t" style="left:10px;top:158.19px;font-size:11px;color:#3A3A3A">Номер:</div>
<div style="left:92px;top:155px;width:237px;height:19px;background:#FEFCF4;border:1px solid #B0AA94"></div>
<div class="t" style="left:96px;top:158.19px;font-size:11px;color:#1A1A1A">00003503553</div>
<div class="t" style="left:334px;top:158.19px;font-size:11px;color:#3A3A3A">от:</div>
<div style="left:349px;top:155px;width:249px;height:19px;background:#FFFFFF;border:1px solid #B0AA94"></div>
<div class="t" style="left:352px;top:158.19px;font-size:11px;color:#1A1A1A">03.09.2015 14:42:16</div>
<div style="left:582px;top:155px;width:16px;height:19px;background:#EDE9DA;border:1px solid #B0AA94"></div>
<svg style="left:584px;top:158px" width="13" height="13" viewBox="0 0 13 13"><rect x="1.5" y="1.5" width="10" height="10" fill="#F0DC90" stroke="#6A5020" stroke-width="1"/><path d="M1.5 4.5h10M1.5 7h10M1.5 9.5h10M4 1.5v10M6.5 1.5v10M9 1.5v10" stroke="#6A5020" stroke-width=".8"/><rect x="1.5" y="1.5" width="10" height="2" fill="#6A5020"/></svg>
<div class="t" style="left:618px;top:158.19px;font-size:11px;color:#3A3A3A">Отразить в:</div>
<div style="left:708px;top:158px;width:13px;height:13px;background:#FFFFFF;border:1px solid #A8A290;border-radius:2px"></div>
<svg style="left:710px;top:160px" width="9" height="9"><path d="M1 4.5l2.5 2.5L8 1.5" stroke="#1A1A30" stroke-width="1.8" fill="none"/></svg>
<div class="t" style="left:723px;top:158.19px;font-size:11px;color:#3A3A3A">упр. учете</div>
<div style="left:786px;top:158px;width:13px;height:13px;background:#FFFFFF;border:1px solid #A8A290;border-radius:2px"></div>
<svg style="left:788px;top:160px" width="9" height="9"><path d="M1 4.5l2.5 2.5L8 1.5" stroke="#1A1A30" stroke-width="1.8" fill="none"/></svg>
<div class="t" style="left:801px;top:158.19px;font-size:11px;color:#3A3A3A">бух. учете</div>
<div style="left:864px;top:158px;width:13px;height:13px;background:#FFFFFF;border:1px solid #A8A290;border-radius:2px"></div>
<svg style="left:866px;top:160px" width="9" height="9"><path d="M1 4.5l2.5 2.5L8 1.5" stroke="#1A1A30" stroke-width="1.8" fill="none"/></svg>
<div class="t" style="left:878px;top:158.19px;font-size:11px;color:#3A3A3A">налог. учете</div>
<div class="t" style="left:10px;top:182.19px;font-size:11px;color:#3A3A3A">Организация:</div>
<div style="left:92px;top:179px;width:506px;height:19px;background:#FFFFFF;border:1px solid #B0AA94"></div>
<div class="t" style="left:96px;top:182.19px;font-size:11px;color:#1A1A1A">ООО "Навигард"</div>
<div style="left:567px;top:179px;width:16px;height:19px;background:#EDE9DA;border:1px solid #B0AA94"></div>
<svg style="left:570px;top:191px" width="10" height="3"><rect x="0.5" y="0.5" width="2" height="2" fill="#4A4A20"/><rect x="4" y="0.5" width="2" height="2" fill="#4A4A20"/><rect x="7.5" y="0.5" width="2" height="2" fill="#4A4A20"/></svg>
<div style="left:582px;top:179px;width:16px;height:19px;background:#EDE9DA;border:1px solid #B0AA94"></div>
<svg style="left:584px;top:182px" width="12" height="12" viewBox="0 0 12 12"><circle cx="5" cy="5" r="3.6" fill="none" stroke="#4A3A10" stroke-width="1.3"/><path d="M7.6 7.6l3.6 3.6" stroke="#4A3A10" stroke-width="1.8"/></svg>
<div style="left:618px;top:179px;width:88px;height:19px;background:#FFFFFF;border:1px solid #B0AA94"></div>
<div class="t" style="left:622px;top:182.19px;font-size:11px;color:#1A1A1A">Со склада</div>
<div style="left:690px;top:179px;width:16px;height:19px;background:#EDE9DA;border:1px solid #B0AA94"></div>
<svg style="left:693px;top:191px" width="10" height="3"><rect x="0.5" y="0.5" width="2" height="2" fill="#4A4A20"/><rect x="4" y="0.5" width="2" height="2" fill="#4A4A20"/><rect x="7.5" y="0.5" width="2" height="2" fill="#4A4A20"/></svg>
<div style="left:708px;top:179px;width:562px;height:19px;background:#FFFFFF;border:1px solid #B0AA94"></div>
<div class="t" style="left:711px;top:182.19px;font-size:11px;color:#1A1A1A">1.Склад-кофе</div>
<div style="left:1239px;top:179px;width:16px;height:19px;background:#EDE9DA;border:1px solid #B0AA94"></div>
<svg style="left:1242px;top:191px" width="10" height="3"><rect x="0.5" y="0.5" width="2" height="2" fill="#4A4A20"/><rect x="4" y="0.5" width="2" height="2" fill="#4A4A20"/><rect x="7.5" y="0.5" width="2" height="2" fill="#4A4A20"/></svg>
<div style="left:1254px;top:179px;width:16px;height:19px;background:#EDE9DA;border:1px solid #B0AA94"></div>
<svg style="left:1256px;top:182px" width="12" height="12" viewBox="0 0 12 12"><circle cx="5" cy="5" r="3.6" fill="none" stroke="#4A3A10" stroke-width="1.3"/><path d="M7.6 7.6l3.6 3.6" stroke="#4A3A10" stroke-width="1.8"/></svg>
<div class="t" style="left:10px;top:206.19px;font-size:11px;color:#3A3A3A">Контрагент:</div>
<div style="left:92px;top:203px;width:506px;height:19px;background:#FFFFFF;border:1px solid #B0AA94"></div>
<div class="t" style="left:96px;top:206.19px;font-size:11px;color:#1A1A1A">Частное лицо</div>
<div style="left:567px;top:203px;width:16px;height:19px;background:#EDE9DA;border:1px solid #B0AA94"></div>
<svg style="left:570px;top:215px" width="10" height="3"><rect x="0.5" y="0.5" width="2" height="2" fill="#4A4A20"/><rect x="4" y="0.5" width="2" height="2" fill="#4A4A20"/><rect x="7.5" y="0.5" width="2" height="2" fill="#4A4A20"/></svg>
<div style="left:582px;top:203px;width:16px;height:19px;background:#EDE9DA;border:1px solid #B0AA94"></div>
<svg style="left:584px;top:206px" width="12" height="12" viewBox="0 0 12 12"><circle cx="5" cy="5" r="3.6" fill="none" stroke="#4A3A10" stroke-width="1.3"/><path d="M7.6 7.6l3.6 3.6" stroke="#4A3A10" stroke-width="1.8"/></svg>
<div class="t" style="left:618px;top:206.19px;font-size:11px;color:#3A3A3A">Договор:</div>
<div style="left:708px;top:203px;width:562px;height:19px;background:#FFFFFF;border:1px solid #B0AA94"></div>
<div class="t" style="left:711px;top:206.19px;font-size:11px;color:#1A1A1A">Основной договор</div>
<div style="left:1239px;top:203px;width:16px;height:19px;background:#EDE9DA;border:1px solid #B0AA94"></div>
<svg style="left:1242px;top:215px" width="10" height="3"><rect x="0.5" y="0.5" width="2" height="2" fill="#4A4A20"/><rect x="4" y="0.5" width="2" height="2" fill="#4A4A20"/><rect x="7.5" y="0.5" width="2" height="2" fill="#4A4A20"/></svg>
<div style="left:1254px;top:203px;width:16px;height:19px;background:#EDE9DA;border:1px solid #B0AA94"></div>
<svg style="left:1256px;top:206px" width="12" height="12" viewBox="0 0 12 12"><circle cx="5" cy="5" r="3.6" fill="none" stroke="#4A3A10" stroke-width="1.3"/><path d="M7.6 7.6l3.6 3.6" stroke="#4A3A10" stroke-width="1.8"/></svg>
<div class="t" style="left:10px;top:224.19px;font-size:11px;color:#3A3A3A">Заказ</div>
<div class="t" style="left:10px;top:237.19px;font-size:11px;color:#3A3A3A">покупателя:</div>
<div style="left:92px;top:227px;width:461px;height:19px;background:#FFFFFF;border:1px solid #B0AA94"></div>
<div style="left:94px;top:229px;width:457px;height:15px;background:#4A63C8;outline:1px dotted #1A2A70"></div>
<div style="left:552px;top:227px;width:16px;height:19px;background:#EDE9DA;border:1px solid #B0AA94"></div>
<svg style="left:555px;top:239px" width="10" height="3"><rect x="0.5" y="0.5" width="2" height="2" fill="#4A4A20"/><rect x="4" y="0.5" width="2" height="2" fill="#4A4A20"/><rect x="7.5" y="0.5" width="2" height="2" fill="#4A4A20"/></svg>
<div style="left:567px;top:227px;width:16px;height:19px;background:#EDE9DA;border:1px solid #B0AA94"></div>
<svg style="left:570px;top:232px" width="10" height="10"><path d="M1 1l8 8M9 1l-8 8" stroke="#2A2A10" stroke-width="1.6"/></svg>
<div style="left:582px;top:227px;width:16px;height:19px;background:#EDE9DA;border:1px solid #B0AA94"></div>
<svg style="left:584px;top:230px" width="12" height="12" viewBox="0 0 12 12"><circle cx="5" cy="5" r="3.6" fill="none" stroke="#4A3A10" stroke-width="1.3"/><path d="M7.6 7.6l3.6 3.6" stroke="#4A3A10" stroke-width="1.8"/></svg>
<div class="t" style="right:28px;top:230.19px;font-size:11px;color:#5460A8">По договору с покупателем долг не рассчитан</div>
<div style="left:1254px;top:227px;width:16px;height:19px;background:#EDE9DA;border:1px solid #B0AA94"></div>
<svg style="left:1256px;top:230px" width="12" height="12" viewBox="0 0 12 12"><circle cx="5" cy="5" r="3.6" fill="none" stroke="#4A3A10" stroke-width="1.3"/><path d="M7.6 7.6l3.6 3.6" stroke="#4A3A10" stroke-width="1.8"/></svg>
<div style="left:10px;top:272px;width:1260px;height:289px;border:1px solid #B8B3A0;background:#FFFAF0"></div>
<div style="left:11px;top:254px;width:90px;height:20px;background:#FFFAF0;border:1px solid #B8B3A0;border-bottom:none"></div>
<div style="left:104px;top:256px;width:90px;height:16px;background:linear-gradient(90deg,#F3EDE2,#F1EBDF 30%,#EFE9DC)"></div>
<div style="left:199px;top:256px;width:93px;height:16px;background:linear-gradient(90deg,#F3EDE2,#F1EBDF 30%,#EFE9DC)"></div>
<div style="left:297px;top:256px;width:49px;height:16px;background:linear-gradient(90deg,#F3EDE2,#F1EBDF 30%,#EFE9DC)"></div>
<div class="t" style="left:16px;top:258.19px;font-size:11px;color:#3A3A3A">Товары (7 поз.)</div>
<div class="t" style="left:112px;top:258.19px;font-size:11px;color:#3A3A3A">Услуги (1 поз.)</div>
<div class="t" style="left:205px;top:258.19px;font-size:11px;color:#3A3A3A">Дополнительно</div>
<div class="t" style="left:303px;top:258.19px;font-size:11px;color:#3A3A3A">Печать</div>
<svg style="left:20px;top:277px" width="16" height="16" viewBox="0 0 16 16"><circle cx="8" cy="8" r="7.3" fill="#88C070" stroke="#5A9048" stroke-width=".9"/><circle cx="7" cy="6" r="5" fill="#B8E0A0" opacity=".6"/><path d="M3.5 8h9M8 3.5v9" stroke="#fff" stroke-width="2.4"/></svg>
<svg style="left:43px;top:277px" width="16" height="16" viewBox="0 0 16 16"><path d="M1.5 .5h7l3 3v9h-10z" fill="#F0F4F8" stroke="#8A96A4" stroke-width=".8"/><path d="M3 4h5M3 6h6M3 8h4" stroke="#8AA8C8" stroke-width=".8"/><circle cx="11" cy="11.5" r="4" fill="#8ACA7A" stroke="#4A8A3A" stroke-width=".8"/><path d="M8.5 11.5h5M11 9v5" stroke="#fff" stroke-width="1.4"/></svg>
<svg style="left:67px;top:277px" width="16" height="16" viewBox="0 0 16 16"><path d="M2 14l1-4L11 2l3 3-8 8z" fill="#50B030" stroke="#2A7018" stroke-width=".8"/><path d="M2 14l1-4 3 3z" fill="#1A4A10"/></svg>
<svg style="left:90px;top:277px" width="16" height="16" viewBox="0 0 16 16"><path d="M2.5 2.5l11 11M13.5 2.5l-11 11" stroke="#E05040" stroke-width="2.6"/></svg>
<svg style="left:112px;top:277px" width="16" height="16" viewBox="0 0 16 16"><rect x="1" y="1" width="14" height="14" fill="#B8C0CA" stroke="#A8B0BC"/><rect x="3" y="2" width="10" height="5" fill="#D0D6DE"/><rect x="3" y="9" width="10" height="6" fill="#C8CED6"/></svg>
<svg style="left:136px;top:277px" width="16" height="16" viewBox="0 0 16 16"><path d="M8 1.5l6.5 6.5H11v6H5V8H1.5z" fill="#A8B8C8" stroke="#98A8B8" stroke-width=".6"/></svg>
<svg style="left:158px;top:277px" width="16" height="16" viewBox="0 0 16 16"><path d="M8 14.5l6.5-6.5H11V2H5v6H1.5z" fill="#6AA8E8" stroke="#3A78C0" stroke-width=".7"/></svg>
<svg style="left:181px;top:277px" width="16" height="16" viewBox="0 0 16 16"><text x="0" y="8" font-family="Liberation Serif" font-weight="bold" font-size="10" fill="#1A4AA0">A</text><text x="0" y="16" font-family="Liberation Serif" font-weight="bold" font-size="9.5" fill="#A01A1A">Я</text><path d="M12.5 3v11.5M10.3 12l2.2 3 2.2-3" stroke="#202020" stroke-width="1.1" fill="none"/></svg>
<svg style="left:204px;top:277px" width="16" height="16" viewBox="0 0 16 16"><text x="0" y="8" font-family="Liberation Serif" font-weight="bold" font-size="9.5" fill="#A01A1A">Я</text><text x="0" y="16" font-family="Liberation Serif" font-weight="bold" font-size="10" fill="#1A4AA0">A</text><path d="M12.5 3v11.5M10.3 12l2.2 3 2.2-3" stroke="#202020" stroke-width="1.1" fill="none"/></svg>
<svg style="left:227px;top:277px" width="16" height="16" viewBox="0 0 16 16"><rect x=".5" y="1" width="15" height="6" fill="#F0E870"/><rect x="6" y="1.5" width="9" height="4" fill="#8098E0"/><path d="M1.5 9v6M3.5 9v6M5 9v6M7 9v6M9 9v6M10.5 9v6M12.5 9v6M14.5 9v6" stroke="#101010" stroke-width="1"/></svg>
<svg style="left:447px;top:277px" width="16" height="16" viewBox="0 0 16 16"><path d="M.5 3.5l3-3h12v12l-3 3H.5z" fill="#2A8A2A"/><rect x=".5" y="3.5" width="12" height="12" fill="#48C038" stroke="#1A6A1A" stroke-width=".6"/><text x="1.3" y="12.8" font-family="Liberation Sans" font-weight="bold" font-size="9" fill="#fff">№</text></svg>
<svg style="left:572px;top:277px" width="16" height="16" viewBox="0 0 16 16"><path d="M.5 3.5l3-3h12v12l-3 3H.5z" fill="#8A6A10"/><rect x=".5" y="3.5" width="12" height="12" fill="#E8B030" stroke="#6A5010" stroke-width=".6"/><rect x="3" y="5.5" width="8" height="8" fill="#fff"/><path d="M3.5 6h6.5v3H6.5v4H3.5z" fill="#3070E0"/><rect x="5.5" y="8.5" width="5.5" height="5" fill="#E82020"/></svg>
<div style="left:249px;top:276px;width:2px;height:18px;border-left:1px solid #CBC6B8;border-right:1px solid #F7F4EE"></div>
<div class="t" style="left:256px;top:278.19px;font-size:11px;color:#3A3A3A">Заполнить</div>
<svg style="left:314px;top:285px" width="6" height="4"><path d="M0 0.5h6L3 3.5z" fill="#202020"/></svg>
<div style="left:324px;top:276px;width:2px;height:18px;border-left:1px solid #CBC6B8;border-right:1px solid #F7F4EE"></div>
<div class="t" style="left:332px;top:278.19px;font-size:11px;color:#3A3A3A">Подбор</div>
<div style="left:375px;top:276px;width:2px;height:18px;border-left:1px solid #CBC6B8;border-right:1px solid #F7F4EE"></div>
<div class="t" style="left:383px;top:278.19px;font-size:11px;color:#3A3A3A">Изменить</div>
<div style="left:441px;top:276px;width:2px;height:18px;border-left:1px solid #CBC6B8;border-right:1px solid #F7F4EE"></div>
<div class="t" style="left:466px;top:278.19px;font-size:11px;color:#3A3A3A">Серийные номера</div>
<div style="left:563px;top:276px;width:2px;height:18px;border-left:1px solid #CBC6B8;border-right:1px solid #F7F4EE"></div>
<div class="t" style="left:589px;top:278.19px;font-size:11px;color:#3A3A3A">Состав набора</div>
<div style="left:17px;top:297px;width:1246px;height:257px;background:#FFFFFF;border:1px solid #B5B09C"></div>
<div style="left:18px;top:298px;width:1244px;height:20px;background:#F1EEDF"></div>
<div style="left:46px;top:298px;width:368px;height:20px;background:#D9D5C5"></div>
<div style="left:18px;top:318px;width:1244px;height:1px;background:#B5B09C"></div>
<div class="t" style="left:21px;top:301.19px;font-size:11px;color:#4A4A4A">№</div>
<div class="t" style="left:49px;top:301.19px;font-size:11px;color:#4A4A4A">Номенклатура</div>
<div class="t" style="left:418px;top:301.19px;font-size:11px;color:#4A4A4A">Хар...</div>
<div class="t" style="left:454px;top:301.19px;font-size:11px;color:#4A4A4A">С...</div>
<div class="t" style="left:479px;top:301.19px;font-size:11px;color:#4A4A4A">Количе...</div>
<div class="t" style="left:535px;top:301.19px;font-size:11px;color:#4A4A4A">Ед.</div>
<div class="t" style="left:578px;top:301.19px;font-size:11px;color:#4A4A4A">К.</div>
<div class="t" style="left:617px;top:301.19px;font-size:11px;color:#4A4A4A">Цена</div>
<div class="t" style="left:686px;top:301.19px;font-size:11px;color:#4A4A4A">Сумма без ск...</div>
<div class="t" style="left:773px;top:301.19px;font-size:11px;color:#4A4A4A">% Руч...</div>
<div class="t" style="left:819px;top:301.19px;font-size:11px;color:#4A4A4A">Сумма</div>
<div class="t" style="left:905px;top:301.19px;font-size:11px;color:#4A4A4A">% ...</div>
<div class="t" style="left:940px;top:301.19px;font-size:11px;color:#4A4A4A">Сумма НДС</div>
<div class="t" style="left:1009px;top:301.19px;font-size:11px;color:#4A4A4A">Всего</div>
<div class="t" style="left:1078px;top:301.19px;font-size:11px;color:#4A4A4A">Способ списа...</div>
<div class="t" style="left:1165px;top:301.19px;font-size:11px;color:#4A4A4A">Склад</div>
<div class="t" style="left:1253px;top:301.19px;font-size:11px;color:#4A4A4A">За</div>
<div style="left:45px;top:298px;width:1px;height:153px;background:#B5B09C"></div>
<div style="left:414px;top:298px;width:1px;height:153px;background:#B5B09C"></div>
<div style="left:450px;top:298px;width:1px;height:153px;background:#B5B09C"></div>
<div style="left:475px;top:298px;width:1px;height:153px;background:#B5B09C"></div>
<div style="left:531px;top:298px;width:1px;height:153px;background:#B5B09C"></div>
<div style="left:574px;top:298px;width:1px;height:153px;background:#B5B09C"></div>
<div style="left:613px;top:298px;width:1px;height:153px;background:#B5B09C"></div>
<div style="left:682px;top:298px;width:1px;height:153px;background:#B5B09C"></div>
<div style="left:769px;top:298px;width:1px;height:153px;background:#B5B09C"></div>
<div style="left:815px;top:298px;width:1px;height:153px;background:#B5B09C"></div>
<div style="left:901px;top:298px;width:1px;height:153px;background:#B5B09C"></div>
<div style="left:936px;top:298px;width:1px;height:153px;background:#B5B09C"></div>
<div style="left:1005px;top:298px;width:1px;height:153px;background:#B5B09C"></div>
<div style="left:1074px;top:298px;width:1px;height:153px;background:#B5B09C"></div>
<div style="left:1161px;top:298px;width:1px;height:153px;background:#B5B09C"></div>
<div style="left:1249px;top:298px;width:1px;height:153px;background:#B5B09C"></div>
<div style="left:18px;top:337px;width:1244px;height:1px;background:#B5B09C"></div>
<div style="left:46px;top:319px;width:368px;height:18px;background:#4A63C8"></div>
<div class="t" style="right:1239px;top:322.19px;font-size:11px;color:#1A1A1A">1</div>
<div class="t" style="left:49px;top:322.19px;font-size:11px;color:#FFFFFF">Кофе LAVAZZA Pronto Crema, 1кг</div>
<div class="t" style="right:753px;top:322.19px;font-size:11px;color:#1A1A1A">6,000</div>
<div class="t" style="left:535px;top:322.19px;font-size:11px;color:#1A1A1A">шт</div>
<div class="t" style="right:671px;top:322.19px;font-size:11px;color:#1A1A1A">1,000</div>
<div class="t" style="right:602px;top:322.19px;font-size:11px;color:#1A1A1A">600,00</div>
<div class="t" style="right:515px;top:322.19px;font-size:11px;color:#1A1A1A">3 600,00</div>
<div class="t" style="right:383px;top:322.19px;font-size:11px;color:#1A1A1A">3 600,00</div>
<div class="t" style="left:905px;top:322.19px;font-size:11px;color:#1A1A1A">18%</div>
<div class="t" style="right:279px;top:322.19px;font-size:11px;color:#1A1A1A">549,15</div>
<div class="t" style="right:210px;top:322.19px;font-size:11px;color:#1A1A1A">3 600,00</div>
<div class="t" style="left:1078px;top:322.19px;font-size:11px;color:#1A1A1A">Со склада</div>
<div class="t" style="left:1165px;top:322.19px;font-size:11px;color:#1A1A1A">1.Склад-кофе</div>
<div style="left:18px;top:356px;width:1244px;height:1px;background:#B5B09C"></div>
<div class="t" style="right:1239px;top:341.19px;font-size:11px;color:#1A1A1A">2</div>
<div class="t" style="left:49px;top:341.19px;font-size:11px;color:#1A1A1A">Капучино Ваниль RISTORA, 0,5кг</div>
<div class="t" style="right:753px;top:341.19px;font-size:11px;color:#1A1A1A">6,000</div>
<div class="t" style="left:535px;top:341.19px;font-size:11px;color:#1A1A1A">шт</div>
<div class="t" style="right:671px;top:341.19px;font-size:11px;color:#1A1A1A">1,000</div>
<div class="t" style="right:602px;top:341.19px;font-size:11px;color:#1A1A1A">225,00</div>
<div class="t" style="right:515px;top:341.19px;font-size:11px;color:#1A1A1A">1 350,00</div>
<div class="t" style="right:383px;top:341.19px;font-size:11px;color:#1A1A1A">1 350,00</div>
<div class="t" style="left:905px;top:341.19px;font-size:11px;color:#1A1A1A">18%</div>
<div class="t" style="right:279px;top:341.19px;font-size:11px;color:#1A1A1A">205,93</div>
<div class="t" style="right:210px;top:341.19px;font-size:11px;color:#1A1A1A">1 350,00</div>
<div class="t" style="left:1078px;top:341.19px;font-size:11px;color:#1A1A1A">Со склада</div>
<div class="t" style="left:1165px;top:341.19px;font-size:11px;color:#1A1A1A">1.Склад-кофе</div>
<div style="left:18px;top:375px;width:1244px;height:1px;background:#B5B09C"></div>
<div class="t" style="right:1239px;top:360.19px;font-size:11px;color:#1A1A1A">3</div>
<div class="t" style="left:49px;top:360.19px;font-size:11px;color:#1A1A1A">Горячий Шоколад RISTORA, 1кг</div>
<div class="t" style="right:753px;top:360.19px;font-size:11px;color:#1A1A1A">3,000</div>
<div class="t" style="left:535px;top:360.19px;font-size:11px;color:#1A1A1A">шт</div>
<div class="t" style="right:671px;top:360.19px;font-size:11px;color:#1A1A1A">1,000</div>
<div class="t" style="right:602px;top:360.19px;font-size:11px;color:#1A1A1A">362,00</div>
<div class="t" style="right:515px;top:360.19px;font-size:11px;color:#1A1A1A">1 086,00</div>
<div class="t" style="right:383px;top:360.19px;font-size:11px;color:#1A1A1A">1 086,00</div>
<div class="t" style="left:905px;top:360.19px;font-size:11px;color:#1A1A1A">18%</div>
<div class="t" style="right:279px;top:360.19px;font-size:11px;color:#1A1A1A">165,66</div>
<div class="t" style="right:210px;top:360.19px;font-size:11px;color:#1A1A1A">1 086,00</div>
<div class="t" style="left:1078px;top:360.19px;font-size:11px;color:#1A1A1A">Со склада</div>
<div class="t" style="left:1165px;top:360.19px;font-size:11px;color:#1A1A1A">1.Склад-кофе</div>
<div style="left:18px;top:394px;width:1244px;height:1px;background:#B5B09C"></div>
<div class="t" style="right:1239px;top:379.19px;font-size:11px;color:#1A1A1A">4</div>
<div class="t" style="left:49px;top:379.19px;font-size:11px;color:#1A1A1A">Размешиватели FLO 105 мм</div>
<div class="t" style="right:753px;top:379.19px;font-size:11px;color:#1A1A1A">1 000,0...</div>
<div class="t" style="left:535px;top:379.19px;font-size:11px;color:#1A1A1A">шт</div>
<div class="t" style="right:671px;top:379.19px;font-size:11px;color:#1A1A1A">1,000</div>
<div class="t" style="right:602px;top:379.19px;font-size:11px;color:#1A1A1A">0,44</div>
<div class="t" style="right:515px;top:379.19px;font-size:11px;color:#1A1A1A">440,00</div>
<div class="t" style="right:383px;top:379.19px;font-size:11px;color:#1A1A1A">440,00</div>
<div class="t" style="left:905px;top:379.19px;font-size:11px;color:#1A1A1A">18%</div>
<div class="t" style="right:279px;top:379.19px;font-size:11px;color:#1A1A1A">67,12</div>
<div class="t" style="right:210px;top:379.19px;font-size:11px;color:#1A1A1A">440,00</div>
<div class="t" style="left:1078px;top:379.19px;font-size:11px;color:#1A1A1A">Со склада</div>
<div class="t" style="left:1165px;top:379.19px;font-size:11px;color:#1A1A1A">1.Склад-кофе</div>
<div style="left:18px;top:413px;width:1244px;height:1px;background:#B5B09C"></div>
<div class="t" style="right:1239px;top:398.19px;font-size:11px;color:#1A1A1A">5</div>
<div class="t" style="left:49px;top:398.19px;font-size:11px;color:#1A1A1A">Стакан FLO 165 мл.</div>
<div class="t" style="right:753px;top:398.19px;font-size:11px;color:#1A1A1A">1 000,0...</div>
<div class="t" style="left:535px;top:398.19px;font-size:11px;color:#1A1A1A">шт</div>
<div class="t" style="right:671px;top:398.19px;font-size:11px;color:#1A1A1A">1,000</div>
<div class="t" style="right:602px;top:398.19px;font-size:11px;color:#1A1A1A">1,30</div>
<div class="t" style="right:515px;top:398.19px;font-size:11px;color:#1A1A1A">1 300,00</div>
<div class="t" style="right:383px;top:398.19px;font-size:11px;color:#1A1A1A">1 300,00</div>
<div class="t" style="left:905px;top:398.19px;font-size:11px;color:#1A1A1A">18%</div>
<div class="t" style="right:279px;top:398.19px;font-size:11px;color:#1A1A1A">198,31</div>
<div class="t" style="right:210px;top:398.19px;font-size:11px;color:#1A1A1A">1 300,00</div>
<div class="t" style="left:1078px;top:398.19px;font-size:11px;color:#1A1A1A">Со склада</div>
<div class="t" style="left:1165px;top:398.19px;font-size:11px;color:#1A1A1A">1.Склад-кофе</div>
<div style="left:18px;top:432px;width:1244px;height:1px;background:#B5B09C"></div>
<div class="t" style="right:1239px;top:417.19px;font-size:11px;color:#1A1A1A">6</div>
<div class="t" style="left:49px;top:417.19px;font-size:11px;color:#1A1A1A">Молочный напиток Ristora "STP" 0,5 кг.</div>
<div class="t" style="right:753px;top:417.19px;font-size:11px;color:#1A1A1A">6,000</div>
<div class="t" style="left:535px;top:417.19px;font-size:11px;color:#1A1A1A">шт</div>
<div class="t" style="right:671px;top:417.19px;font-size:11px;color:#1A1A1A">1,000</div>
<div class="t" style="right:602px;top:417.19px;font-size:11px;color:#1A1A1A">255,00</div>
<div class="t" style="right:515px;top:417.19px;font-size:11px;color:#1A1A1A">1 530,00</div>
<div class="t" style="right:383px;top:417.19px;font-size:11px;color:#1A1A1A">1 530,00</div>
<div class="t" style="left:905px;top:417.19px;font-size:11px;color:#1A1A1A">18%</div>
<div class="t" style="right:279px;top:417.19px;font-size:11px;color:#1A1A1A">233,39</div>
<div class="t" style="right:210px;top:417.19px;font-size:11px;color:#1A1A1A">1 530,00</div>
<div class="t" style="left:1078px;top:417.19px;font-size:11px;color:#1A1A1A">Со склада</div>
<div class="t" style="left:1165px;top:417.19px;font-size:11px;color:#1A1A1A">1.Склад-кофе</div>
<div style="left:18px;top:451px;width:1244px;height:1px;background:#B5B09C"></div>
<div class="t" style="right:1239px;top:436.19px;font-size:11px;color:#1A1A1A">7</div>
<div class="t" style="left:49px;top:436.19px;font-size:11px;color:#1A1A1A">Кисель Черная смородина 0,5 кг</div>
<div class="t" style="right:753px;top:436.19px;font-size:11px;color:#1A1A1A">4,000</div>
<div class="t" style="left:535px;top:436.19px;font-size:11px;color:#1A1A1A">шт</div>
<div class="t" style="right:671px;top:436.19px;font-size:11px;color:#1A1A1A">1,000</div>
<div class="t" style="right:602px;top:436.19px;font-size:11px;color:#1A1A1A">155,00</div>
<div class="t" style="right:515px;top:436.19px;font-size:11px;color:#1A1A1A">620,00</div>
<div class="t" style="right:383px;top:436.19px;font-size:11px;color:#1A1A1A">620,00</div>
<div class="t" style="left:905px;top:436.19px;font-size:11px;color:#1A1A1A">18%</div>
<div class="t" style="right:279px;top:436.19px;font-size:11px;color:#1A1A1A">94,58</div>
<div class="t" style="right:210px;top:436.19px;font-size:11px;color:#1A1A1A">620,00</div>
<div class="t" style="left:1078px;top:436.19px;font-size:11px;color:#1A1A1A">Со склада</div>
<div class="t" style="left:1165px;top:436.19px;font-size:11px;color:#1A1A1A">1.Склад-кофе</div>
<div style="left:1262px;top:298px;width:1px;height:255px;background:#B5B09C"></div>
<div style="left:18px;top:537px;width:1244px;height:16px;background:#F9F6EE;border-top:1px solid #E4E0D4"></div>
<div style="left:19px;top:539px;width:18px;height:14px;background:linear-gradient(#F2EFE6,#E6E2D6)"></div>
<svg style="left:24px;top:541px" width="8" height="9"><path d="M5.5 1L2 4.5 5.5 8" stroke="#9A9888" stroke-width="1.3" fill="none"/></svg>
<div style="left:38px;top:539px;width:1134px;height:14px;background:linear-gradient(#EFEBE1,#E6E1D4)"></div>
<div style="left:1243px;top:539px;width:18px;height:14px;background:#E4E0D6"></div>
<svg style="left:1249px;top:541px" width="8" height="9"><path d="M2.5 1L6 4.5 2.5 8" stroke="#B8B4A8" stroke-width="1.3" fill="none"/></svg>
<div style="left:1263px;top:298px;width:6px;height:256px;background:#FFFAF0"></div>
<div style="left:1262px;top:297px;width:1px;height:257px;background:#B5B09C"></div>
<div class="t" style="left:10px;top:563.19px;font-size:11px;color:#5462AA">Тип цен: Цена RUR</div>
<div class="t" style="left:10px;top:586.19px;font-size:11px;color:#3A3A3A">Счет-фактура:</div>
<div class="t" style="left:93px;top:586.19px;font-size:11px;color:#2A2A2A;text-decoration:underline">Ввести счет-фактуру</div>
<div class="t" style="left:1116px;top:564.19px;font-size:11px;color:#3A3A3A">Всего (руб.):</div>
<div class="t" style="right:11.5px;top:563.67px;font-size:12.5px;font-weight:bold;color:#111">10 426,00</div>
<div class="t" style="left:1116px;top:586.19px;font-size:11px;color:#3A3A3A">НДС (в т. ч.):</div>
<div class="t" style="right:12px;top:585.67px;font-size:12.5px;font-weight:bold;color:#111">1 590,41</div>
<div class="t" style="left:10px;top:609.19px;font-size:11px;color:#3A3A3A">Комментарий:</div>
<div style="left:92px;top:606px;width:1178px;height:19px;background:#FFFFFF;border:1px solid #B0AA94"></div>
<div class="t" style="left:95px;top:609.19px;font-size:11px;color:#1A1A1A">доставка 03.09 озерная 44заранее позвонить</div>
<div style="left:10px;top:632px;width:13px;height:13px;background:#FFFFFF;border:1px solid #A8A290;border-radius:2px"></div>
<svg style="left:12px;top:634px" width="9" height="9"><path d="M1 4.5l2.5 2.5L8 1.5" stroke="#1A1A30" stroke-width="1.8" fill="none"/></svg>
<div class="t" style="left:25px;top:632.19px;font-size:11px;color:#3A3A3A">Касса</div>
<div style="left:10px;top:653px;width:13px;height:13px;background:#FFFFFF;border:1px solid #A8A290;border-radius:2px"></div>
<div class="t" style="left:25px;top:653.19px;font-size:11px;color:#3A3A3A">Банк</div>
<div class="t" style="left:11.5px;top:676.19px;font-size:11px;color:#3A3A3A">ДД:</div>
<div style="left:37px;top:673px;width:621px;height:19px;background:#FFFFFF;border:1px solid #B0AA94"></div>
<div class="t" style="left:40px;top:676.19px;font-size:11px;color:#1A1A1A">03.09.2015</div>
<div style="left:642px;top:673px;width:16px;height:19px;background:#EDE9DA;border:1px solid #B0AA94"></div>
<svg style="left:644px;top:676px" width="13" height="13" viewBox="0 0 13 13"><rect x="1.5" y="1.5" width="10" height="10" fill="#F0DC90" stroke="#6A5020" stroke-width="1"/><path d="M1.5 4.5h10M1.5 7h10M1.5 9.5h10M4 1.5v10M6.5 1.5v10M9 1.5v10" stroke="#6A5020" stroke-width=".8"/><rect x="1.5" y="1.5" width="10" height="2" fill="#6A5020"/></svg>
<div style="left:2px;top:700px;width:1276px;height:25px;background:#EBE5DA;border-top:1px solid #B5AF9F"></div>
<div class="t" style="left:960px;top:706.19px;font-size:11px;color:#2A2A2A">Расходная накладная</div>
<div style="left:1078px;top:704px;width:2px;height:18px;border-left:1px solid #CBC6B8;border-right:1px solid #F7F4EE"></div>
<div class="t" style="left:1085px;top:706.19px;font-size:11px;color:#2A2A2A">Печать</div>
<div style="left:1128px;top:704px;width:2px;height:18px;border-left:1px solid #CBC6B8;border-right:1px solid #F7F4EE"></div>
<div class="t" style="left:1134px;top:705.84px;font-size:12px;font-weight:bold;color:#2A2A2A">OK</div>
<div style="left:1159px;top:704px;width:2px;height:18px;border-left:1px solid #CBC6B8;border-right:1px solid #F7F4EE"></div>
<div class="t" style="left:1166px;top:706.19px;font-size:11px;color:#2A2A2A">Записать</div>
<div style="left:1221px;top:704px;width:2px;height:18px;border-left:1px solid #CBC6B8;border-right:1px solid #F7F4EE"></div>
<div class="t" style="left:1228px;top:706.19px;font-size:11px;color:#2A2A2A">Закрыть</div>
<div style="left:0px;top:725px;width:1280px;height:1px;background:#FFFDF8"></div>
<div style="left:0px;top:726px;width:1280px;height:24px;background:#EBE5DA"></div>
<div style="left:2px;top:728px;width:171px;height:20px;background:#BFBCB2;border:1px solid #A8A59C"></div>
<svg style="left:5px;top:731px" width="13" height="14" viewBox="0 0 13 14"><rect x=".5" y=".5" width="12" height="13" fill="#F8FBFF" stroke="#6A7888" stroke-width="1"/><path d="M3 3.5h7M3 5.5h7M3 7.5h7M3 9.5h7M3 11.5h7" stroke="#A8C0D8" stroke-width=".8"/></svg>
<div class="t" style="left:20px;top:732.19px;font-size:11px;color:#2A2A2A">Реализ...: 3 сентября 2015 г.</div>
<div style="left:174px;top:728px;width:172px;height:20px;background:#C8D6EA;border:1px solid #A6B4C8"></div>
<svg style="left:178px;top:731px" width="13" height="14" viewBox="0 0 13 14"><rect x=".5" y=".5" width="12" height="13" fill="#F8FBFF" stroke="#6A7888" stroke-width="1"/><path d="M3 3.5h7M3 5.5h7M3 7.5h7M3 9.5h7M3 11.5h7" stroke="#A8C0D8" stroke-width=".8"/></svg>
<div class="t" style="left:193px;top:732.19px;font-size:11px;color:#2A2A2A">...: продажа, комиссия. Про...</div>
<div style="left:0px;top:750px;width:1280px;height:1px;background:#CFC8BA"></div>
<div style="left:0px;top:751px;width:1280px;height:19px;background:#EBE5DA"></div>
<div style="left:1px;top:751px;width:1209px;height:18px;border:1px solid #DAD6C8;border-right-color:#F8F6EE;border-bottom-color:#F8F6EE"></div>
<div class="t" style="left:4px;top:753.19px;font-size:11px;color:#2A2A2A">Для получения подсказки нажмите F1</div>
<div style="left:1212px;top:751px;width:29px;height:18px;border:1px solid #D6D2C4;border-right-color:#F8F6EE;border-bottom-color:#F8F6EE"></div>
<div class="t" style="left:1217px;top:753.19px;font-size:11px;color:#ABA89C">CAP</div>
<div style="left:1245px;top:751px;width:34px;height:18px;border:1px solid #D6D2C4;border-right-color:#F8F6EE;border-bottom-color:#F8F6EE"></div>
<div class="t" style="left:1249px;top:753.19px;font-size:11px;color:#3A3A3A">NUM</div>
<div style="left:0px;top:770px;width:1280px;height:30px;background:linear-gradient(#3168D5 0,#4D90FE 1px,#2A6BF0 3px,#245EDB 6px,#2257D5 20px,#1D4EC4 28px,#1941A5 30px)"></div>
<div style="left:0;top:770px;width:96px;height:30px;border-radius:0 11px 11px 0;background:linear-gradient(#58A858 0,#7CC27C 2px,#4AAA4A 5px,#3A9D3A 12px,#36973A 22px,#2E872E 30px);box-shadow:inset -3px 0 4px #2A6A2A, inset 2px 0 2px #2A6A2A"></div>
<svg style="left:11px;top:776px" width="19" height="18" viewBox="0 0 19 18"><path d="M3 1.5c2-1 4-1 6 .5l-1.2 6.5c-2-1.3-4-1.3-6-.3z" fill="#F06A28"/><path d="M10 2.5c2 1.2 4 1.2 7 .2l-1.2 6.5c-3 1-5 1-7-.3z" fill="#7ACA28"/><path d="M1.6 9.3c2-1 4-1 6 .3L6.4 16c-2-1.3-4-1.3-6-.3z" fill="#4A80E8"/><path d="M8.6 10c2 1.3 4 1.3 7 .2L14.4 16.8c-3 1-5 1-7-.3z" fill="#F8C828"/></svg>
<div class="t" style="left:35px;top:778.11px;font-size:17px;font-weight:bold;color:#FFFFFF;font-style:italic;text-shadow:1px 1px 1px #1A4A1A">пуск</div>
<svg style="left:107px;top:776px" width="18" height="17"><path d="M3 2h9l3 3v9c0 1.5-1 2.5-2.5 2.5H4C2.5 16.5 1.5 15.5 1.5 14V4C1.5 3 2 2 3 2z" fill="#F0F6FF" stroke="#1A3A90" stroke-width="1"/><path d="M11 5c-3-2-7 0-7 4s4 6 7 3" stroke="#2A6AD0" stroke-width="2" fill="none"/><path d="M6 9h6" stroke="#2A6AD0" stroke-width="1.5"/><circle cx="16" cy="7" r="1.3" fill="#E04040"/></svg>
<svg style="left:131px;top:776px" width="17" height="17"><path d="M14.5 10H6c.3 2 1.7 3.2 3.5 3.2 1.3 0 2.3-.5 3-1.4h2.5c-.9 2.3-3 3.7-5.6 3.7C5.9 15.5 3.3 13 3.3 9.3S5.9 3 9.4 3s5.4 2.6 5.1 7zM6.1 8h5.8c-.2-1.8-1.2-2.9-2.9-2.9S6.4 6.2 6.1 8z" fill="#3090F0" stroke="#0A4AA0" stroke-width=".6"/><path d="M2 15.5C1 12 6 3 15.5 1.5c1 1 0 3-1.5 4" stroke="#F0C030" stroke-width="1.6" fill="none"/></svg>
<svg style="left:155px;top:776px" width="15" height="17"><path d="M.5 .5h10l3.5 3.5v12.5H.5z" fill="#fff" stroke="#C0C8D0"/><text x="1.5" y="14" font-family="Liberation Sans" font-weight="bold" font-size="12.5" fill="#000">A</text></svg>
<svg style="left:177px;top:776px" width="17" height="17"><circle cx="8.5" cy="8.5" r="7.8" fill="#F4F4F4" stroke="#D0D0D8" stroke-width=".6"/><path d="M8.5 16.3A7.8 7.8 0 0 1 1.5 12" stroke="#E01010" stroke-width="1.2" fill="none"/><path d="M3.5 2.8l5 6.2v7M14 3.5L8.5 9" stroke="#E01818" stroke-width="3" fill="none"/></svg>
<svg style="left:200px;top:776px" width="17" height="17"><path d="M3.5 .5h9l3 3v12.5h-12z" fill="#fff" stroke="#1A1A40" stroke-width=".8"/><rect x="1" y="4" width="5.5" height="6" fill="#D02020"/></svg>
<div style="left:271px;top:773px;width:160px;height:24px;border-radius:3px;background:linear-gradient(#5A9AFF 0,#3C81F3 3px,#3A7EF0 18px,#3274E8 100%);border:1px solid #6AA0F8;"></div>
<div style="left:431px;top:773px;width:160px;height:24px;border-radius:3px;background:linear-gradient(#5A9AFF 0,#3C81F3 3px,#3A7EF0 18px,#3274E8 100%);border:1px solid #6AA0F8;"></div>
<div style="left:591px;top:773px;width:160px;height:24px;border-radius:3px;background:linear-gradient(#1A4AB8 0,#1E50C0 4px,#1C4CBA 100%);border:1px solid #1A3A90;box-shadow:inset 1px 1px 2px #0A2A80"></div>
<div style="left:751px;top:773px;width:159px;height:24px;border-radius:3px;background:linear-gradient(#5A9AFF 0,#3C81F3 3px,#3A7EF0 18px,#3274E8 100%);border:1px solid #6AA0F8;"></div>
<svg style="left:281px;top:777px" width="14" height="17"><path d="M2 2h9l2 13H4z" fill="#9AD0F0" stroke="#2A70B0"/><path d="M3 1.5h8" stroke="#3A80C0" stroke-width="2" stroke-dasharray="1 1"/></svg>
<div class="t" style="left:300px;top:778.19px;font-size:11px;color:#FFFFFF">Безымянный - Блокнот</div>
<svg style="left:441px;top:777px" width="17" height="17"><circle cx="8.5" cy="8.5" r="7.8" fill="#F4F4F4" stroke="#D0D0D8" stroke-width=".6"/><path d="M8.5 16.3A7.8 7.8 0 0 1 1.5 12" stroke="#E01010" stroke-width="1.2" fill="none"/><path d="M3.5 2.8l5 6.2v7M14 3.5L8.5 9" stroke="#E01818" stroke-width="3" fill="none"/></svg>
<div class="t" style="left:460px;top:778.19px;font-size:11px;color:#FFFFFF">Создание 2-х докум...</div>
<svg style="left:602px;top:778px" width="16" height="16" viewBox="0 0 16 16"><defs><radialGradient id="lg2" cx="45%" cy="40%" r="60%"><stop offset="0" stop-color="#FFF6C8"/><stop offset=".6" stop-color="#FBE27A"/><stop offset="1" stop-color="#EDB440"/></radialGradient></defs><circle cx="8" cy="8" r="7.5" fill="url(#lg2)"/><path d="M2.8 6.2l2-1.2h1.1v6.2H4.4V6.8l-1.3.6z" fill="#C81E0A"/><path d="M12.5 6.3C12 4.8 10.8 4.2 9.6 4.2 7.6 4.2 6.6 5.8 6.6 7.6c0 .9.3 1.7.9 2.2h1.8c-.8-.4-1.2-1.2-1.2-2.2 0-1.2.6-2.1 1.6-2.1.7 0 1.2.4 1.4 1z" fill="#C81E0A"/><rect x="7" y="8.6" width="7.6" height="1.6" fill="#C81E0A"/></svg>
<div class="t" style="left:622px;top:778.19px;font-size:11px;color:#FFFFFF">1C:Предприятие - В...</div>
<svg style="left:761px;top:777px" width="16" height="17"><rect x="1" y="1" width="13" height="15" fill="#E8ECF4" stroke="#303850"/><path d="M3 14l9-9" stroke="#2040A0" stroke-width="2"/><path d="M3 14l3-1" stroke="#C02060" stroke-width="2"/></svg>
<div class="t" style="left:780px;top:778.19px;font-size:11px;color:#FFFFFF">screenshot-журнал о...</div>
<div style="left:1132px;top:770px;width:148px;height:30px;background:linear-gradient(#1AA0F8 0,#0C8AEC 3px,#0D8DEA 20px,#0A7CDC 30px);border-left:1px solid #0A5AC0;box-shadow:inset 1px 0 1px #40B0FF"></div>
<div style="left:1106px;top:775px;width:15px;height:17px;background:#2860D8;border:1px solid #5C90F0"></div>
<div class="t" style="left:1107px;top:777.53px;font-size:10px;color:#fff;letter-spacing:-1px">RU</div>
<svg style="left:1124px;top:776px" width="20" height="19"><circle cx="10" cy="9.5" r="8.5" fill="#3A80F0" stroke="#D0E8FF" stroke-width="1.2"/><path d="M11.5 5.5L7.5 9.5l4 4" stroke="#fff" stroke-width="2" fill="none"/></svg>
<svg style="left:1146px;top:777px" width="16" height="17"><circle cx="7" cy="7" r="6" fill="#fff" stroke="#1A5AB0" stroke-width="1.3"/><path d="M3 7h8M5 5l-2 2 2 2M9 5l2 2-2 2" stroke="#1A5AB0" stroke-width="1.2" fill="none"/><rect x="5" y="12" width="10" height="4" rx="1" fill="#50E030" stroke="#107010" stroke-width=".6"/></svg>
<svg style="left:1162px;top:776px" width="17" height="17"><path d="M2 9l7-6 7 3-7 7z" fill="#F0F0F0" stroke="#303030" stroke-width=".8"/><path d="M9 13l7-7v4l-7 6z" fill="#B0B0B0" stroke="#303030" stroke-width=".8"/><path d="M1 14l5-4M1 15l5-3" stroke="#E02020" stroke-width="1"/><path d="M2 16l5-3" stroke="#20A020" stroke-width="1"/></svg>
<svg style="left:1181px;top:776px" width="16" height="17"><rect x="1" y="4" width="9" height="7" fill="#6A8AC8" stroke="#303040" stroke-width=".7"/><path d="M11 3a6 6 0 010 9M13 1a9 9 0 010 13" stroke="#E0E8F8" stroke-width="1.2" fill="none"/><path d="M8 12l5 4M13 12l-5 4" stroke="#E02020" stroke-width="1.6"/></svg>
<svg style="left:1198px;top:777px" width="15" height="15"><path d="M1.5 2c3 0 4.5-1 6-1.5C9 1 10.5 2 13.5 2c0 7-2.5 10-6 12C4 12 1.5 9 1.5 2z" fill="#60B030" stroke="#407020" stroke-width=".8"/><path d="M4.5 7l2 2 4-4" stroke="#fff" stroke-width="1.6" fill="none"/></svg>
<svg style="left:1216px;top:776px" width="17" height="17"><path d="M8.5 1l2 5.5h5.5l-4.5 3.5 2 6-5-3.5-5 3.5 2-6L1 6.5h5.5z" fill="#2A6AD8" stroke="#0A2A60" stroke-width="1.2"/></svg>
<div class="t" style="left:1240px;top:778.19px;font-size:11px;color:#FFFFFF">16:56</div>
<svg style="left:0;top:0" width="1280" height="800"><path d="M102.2 149.1 L138.8 148.4 L157.0 149.1 L166.9 154.0 L176.7 161.1 L180.3 166.7 L178.1 171.6 L169.7 174.5 L144.4 175.9 L119.0 176.6 L93.8 175.9 L83.9 171.0 L81.8 162.5 L83.2 155.5 L92.3 152.0 L102.2 149.1" fill="none" stroke="#D60A0A" stroke-width="2.3" stroke-linejoin="round" stroke-linecap="round"/><path d="M366.2 145.8 L385.0 146.2 L394.4 150.9 L404.7 156.6 L407.5 163.1 L408.9 172.5 L408.9 180.9 L389.7 180.9 L356.9 179.5 L345.6 175.8 L337.2 171.6 L333.0 165.0 L334.8 158.4 L343.7 153.7 L351.2 151.9 L356.9 149.1 L366.2 145.8" fill="none" stroke="#D60A0A" stroke-width="2.3" stroke-linejoin="round" stroke-linecap="round"/><path d="M120.5 198.5 L116.3 199.8 L79.7 197.7 L73.4 200.5 L72.0 210.3 L78.3 217.4 L106.4 218.8 L138.8 220.9 L186.6 220.9 L211.9 220.2 L214.7 213.1 L214.0 200.5 L206.3 196.3 L158.5 196.3 L120.5 197.7 L110.0 198.0" fill="none" stroke="#D60A0A" stroke-width="2.3" stroke-linejoin="round" stroke-linecap="round"/><path d="M1232.5 541.2 L1245.0 541.9 L1252.5 543.8 L1260.0 551.2 L1267.5 560.0 L1270.6 567.5 L1271.2 576.2 L1269.4 582.5 L1266.2 585.6 L1242.5 586.2 L1212.5 585.0 L1206.2 580.0 L1203.8 576.2 L1202.5 567.5 L1204.4 560.6 L1208.8 556.2 L1215.0 553.8 L1220.0 547.5 L1225.0 542.5 L1232.5 541.2" fill="none" stroke="#D60A0A" stroke-width="2.3" stroke-linejoin="round" stroke-linecap="round"/><path d="M1215.0 560.0 L1221.2 551.0" fill="none" stroke="#D60A0A" stroke-width="2.3" stroke-linejoin="round" stroke-linecap="round"/><path d="M1223.8 550.6 L1230.6 550.6" fill="none" stroke="#D60A0A" stroke-width="2.3" stroke-linejoin="round" stroke-linecap="round"/><path d="M217.9 530.2 L206.3 535.3 L202.5 536.2 L178.0 547.5 L163.0 551.2 L153.8 555.0 L131.2 568.0 L123.8 569.0 L112.5 572.8 L78.8 592.5 L71.2 598.0 L57.5 610.0 L47.5 617.5 L37.5 625.0 L28.8 631.9 L21.2 638.0 L16.2 640.0 L13.8 639.4" fill="none" stroke="#D60A0A" stroke-width="2.3" stroke-linejoin="round" stroke-linecap="round"/><path d="M22.5 660.0 L56.2 660.0 L100.0 657.5 L110.0 653.1 L120.0 652.5 L150.0 643.0 L160.0 639.4 L187.5 633.1 L220.0 622.2 L244.4 612.8 L254.7 604.4 L260.3 596.9 L265.0 589.4 L274.4 574.4" fill="none" stroke="#D60A0A" stroke-width="2.3" stroke-linejoin="round" stroke-linecap="round"/><path d="M50.6 683.4 L61.9 686.2 L75.0 690.0 L105.0 696.6 L131.2 698.4 L220.0 698.8 L238.8 698.8 L257.5 695.0 L280.0 691.2 L302.5 682.0 L317.5 674.4 L328.8 663.0 L338.0 650.0 L343.8 642.5 L349.4 636.0 L351.2 631.2 L355.0 620.0 L356.0 606.2 L358.8 591.2 L361.6 581.9 L362.5 573.4" fill="none" stroke="#D60A0A" stroke-width="2.3" stroke-linejoin="round" stroke-linecap="round"/><path d="M85.0 633.1 L75.0 631.9 L62.5 628.8 L52.5 625.0 L47.5 626.2 L37.5 629.4 L25.0 631.2 L11.2 632.5 L8.8 636.9 L7.5 647.5 L7.5 660.0 L7.9 678.8 L10.3 686.2 L16.9 692.8 L28.1 699.4 L37.5 705.0 L54.4 706.0 L65.6 707.8 L80.6 709.7 L120.0 710.6 L150.0 711.6 L178.0 712.5 L196.9 716.2 L219.4 721.0 L238.8 720.4 L257.5 724.0 L298.8 724.7 L304.4 726.0 L440.0 725.7 L509.0 725.3 L517.2 722.3 L616.7 721.2 L631.0 715.2 L639.0 712.1 L651.2 707.0 L667.5 700.0 L676.6 695.9 L679.7 690.8 L679.7 682.7 L677.7 677.6 L673.6 672.5 L665.5 665.4 L655.3 662.3 L651.2 660.3 L641.1 657.9 L550.7 657.9 L547.7 658.9 L525.3 658.9 L517.2 660.3 L460.0 660.3 L422.5 660.3 L398.1 657.5 L373.8 654.1 L355.0 651.9 L340.0 649.0 L325.0 644.4 L313.8 644.0 L295.0 640.6 L276.2 637.8 L261.2 635.0 L244.4 635.0 L238.8 634.0 L220.0 634.0 L160.0 633.8 L120.0 633.1 L116.2 630.0 L106.2 628.1 L93.8 627.5 L82.5 628.8 L81.2 630.6" fill="none" stroke="#D60A0A" stroke-width="2.3" stroke-linejoin="round" stroke-linecap="round"/></svg>
<div class="t" style="left:176.5px;top:492.93px;font-size:15.5px;color:#D42626">Касса</div>
<div class="t" style="left:249.4px;top:543.23px;font-size:15.5px;color:#D42626">Банк</div>
<div class="t" style="left:339px;top:547.46px;font-size:16px;color:#D42626">Дата доставки</div></div></body></html>
